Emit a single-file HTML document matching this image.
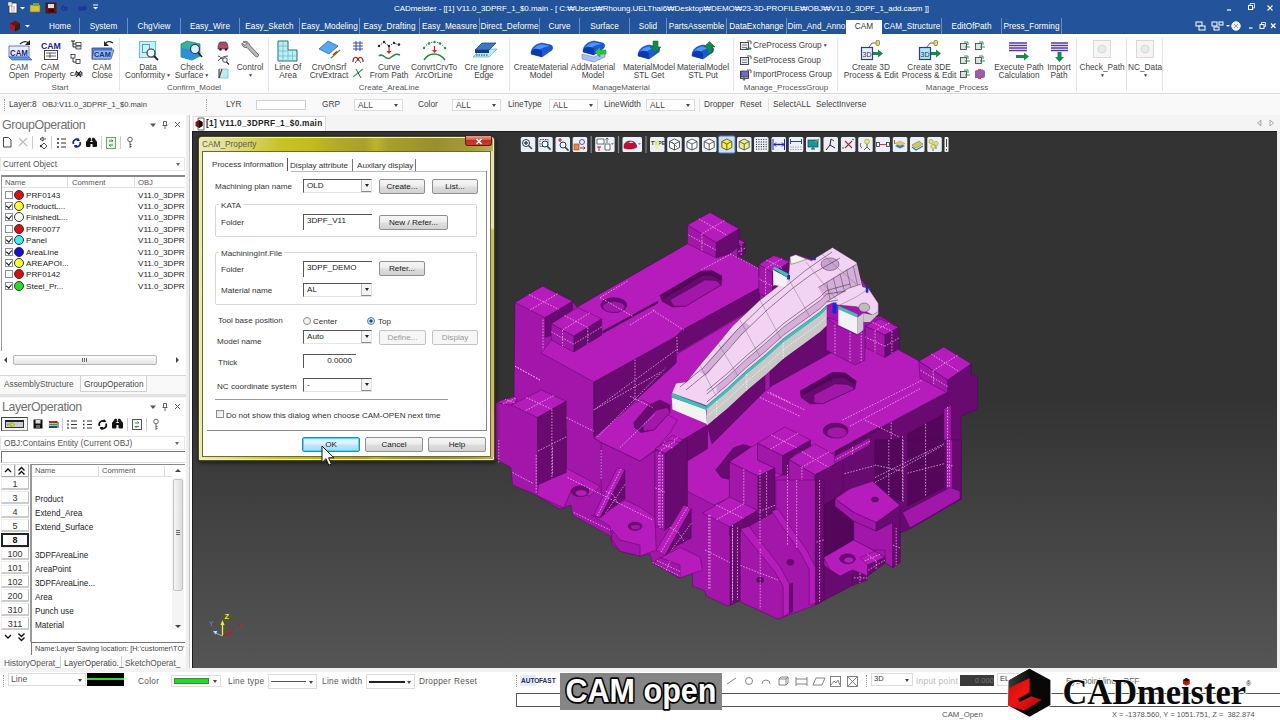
<!DOCTYPE html>
<html><head><meta charset="utf-8"><title>CADmeister</title>
<style>
*{box-sizing:border-box;margin:0;padding:0}
html,body{width:1280px;height:720px;overflow:hidden;background:#fff;font-family:"Liberation Sans","NanumGothic",sans-serif;font-size:9px;color:#333}
.a{position:absolute}
.t{position:absolute;white-space:nowrap;line-height:1}
#hdr{position:absolute;left:0;top:0;width:1280px;height:34px;background:#23539a}
#hdr .tab{position:absolute;top:19px;height:15px;color:#fff;font-size:8.2px;line-height:16.5px;text-align:center;white-space:nowrap;overflow:hidden;letter-spacing:.05px}
#hdr .sep{position:absolute;top:18px;width:1px;height:16px;background:#6f8fc4}
#rib{position:absolute;left:0;top:34px;width:1280px;height:60px;background:#fff;border-bottom:1px solid #d6dbe3}
#rib .gs{position:absolute;top:4px;width:1px;height:53px;background:#e1e4ea}
#rib .gl{position:absolute;top:49px;font-size:8px;color:#555;white-space:nowrap;transform:translateX(-50%);line-height:9px;letter-spacing:0}
#rib .lb{position:absolute;font-size:8.3px;color:#444;white-space:nowrap;transform:translateX(-50%);line-height:8px;text-align:center;letter-spacing:0}
#rib .ar{font-size:5px;vertical-align:1px;margin-left:1px}
</style></head><body>
<div id="hdr">
<svg class="a" style="left:0;top:0" width="120" height="18" viewBox="0 0 120 18">
<rect x="9" y="3" width="8" height="10" fill="#fff" stroke="#333" stroke-width=".8"/><rect x="8" y="2" width="4" height="4" fill="#e8e8d0" stroke="#555" stroke-width=".5"/><path d="M11 7h4M11 9h4M11 11h4" stroke="#777" stroke-width=".6"/>
<path d="M20 7l2.5 2.5 2.5-2.5z" fill="#fff"/>
<rect x="30" y="5" width="10" height="7" fill="#d8c040" stroke="#665" stroke-width=".6"/><rect x="33" y="3" width="6" height="3" fill="#70a040"/>
<rect x="46" y="3" width="10" height="10" fill="#7a1010" stroke="#222" stroke-width=".8"/><rect x="48" y="4" width="6" height="4" fill="#ddd"/><rect x="48" y="9" width="6" height="3" fill="#400"/>
<path d="M62 7h5v3h-5z M64 5l-3 3 3 3" fill="#1c3c9c" stroke="#1a34a0" stroke-width=".8"/>
<path d="M79 7h5v3h-5z M84 5l3 3-3 3" fill="#1c3c9c" stroke="#1a34a0" stroke-width=".8"/>
<path d="M93 5h5" stroke="#fff" stroke-width="1"/><path d="M93 7l2.5 2.5 2.5-2.5z" fill="#fff"/>
</svg>
<div class="t" style="left:394px;top:5px;color:#fff;font-size:8px;letter-spacing:-.06px">CADmeister - [[1] V11.0_3DPRF_1_$0.main - [ C:₩Users₩Rhoung.UELThai6₩Desktop₩DEMO₩23-3D-PROFILE₩OBJ₩V11.0_3DPF_1_add.casm ]]</div>
<svg class="a" style="left:1220px;top:0" width="60" height="18" viewBox="0 0 60 18"><path d="M7 10h4" stroke="#fff" stroke-width="1.2"/><rect x="28.500" y="5.500" width="4" height="4" fill="none" stroke="#fff"/><path d="M30 5v-1.500h4.500v4.500h-1.500" fill="none" stroke="#fff" stroke-width=".8"/><path d="M47.500 5.500l5 5M52.500 5.500l-5 5" stroke="#fff" stroke-width="1.200"/></svg>
<svg class="a" style="left:8px;top:18px" width="32" height="16" viewBox="0 0 32 16"><path d="M7 3l5 2.500v5.500l-5 2.500l-5-2.500v-5.500z" fill="#b01818"/><path d="M7 3l5 2.500v5.500l-5 2.500z" fill="#222"/><path d="M7 3l5 2.500l-5 2.500l-5-2.500z" fill="#701010"/><path d="M17 7l2.500 2.500 2.500-2.500z" fill="#fff"/></svg>
<div class="tab" style="left:41px;width:38px">Home</div>
<div class="tab" style="left:80px;width:47px">System</div>
<div class="tab" style="left:128px;width:52px">ChgView</div>
<div class="tab" style="left:181px;width:58px">Easy_Wire</div>
<div class="tab" style="left:240px;width:59px">Easy_Sketch</div>
<div class="tab" style="left:300px;width:59px">Easy_Modeling</div>
<div class="tab" style="left:360px;width:59px">Easy_Drafting</div>
<div class="tab" style="left:420px;width:59px">Easy_Measure</div>
<div class="tab" style="left:480px;width:59px">Direct_Deforme</div>
<div class="tab" style="left:540px;width:39px">Curve</div>
<div class="tab" style="left:580px;width:49px">Surface</div>
<div class="tab" style="left:630px;width:36px">Solid</div>
<div class="tab" style="left:667px;width:59px">PartsAssemble</div>
<div class="tab" style="left:727px;width:59px">DataExchange</div>
<div class="tab" style="left:787px;width:59px">Dim_And_Anno</div>
<div class="tab" style="left:846px;width:36px;background:#fff;color:#333;top:20px;height:14px;line-height:13px">CAM</div>
<div class="tab" style="left:883px;width:58px">CAM_Structure</div>
<div class="tab" style="left:942px;width:59px">EditOfPath</div>
<div class="tab" style="left:1002px;width:59px">Press_Forming</div>
<div class="sep" style="left:79px"></div>
<div class="sep" style="left:127px"></div>
<div class="sep" style="left:180px"></div>
<div class="sep" style="left:239px"></div>
<div class="sep" style="left:299px"></div>
<div class="sep" style="left:359px"></div>
<div class="sep" style="left:419px"></div>
<div class="sep" style="left:479px"></div>
<div class="sep" style="left:539px"></div>
<div class="sep" style="left:579px"></div>
<div class="sep" style="left:629px"></div>
<div class="sep" style="left:666px"></div>
<div class="sep" style="left:726px"></div>
<div class="sep" style="left:786px"></div>
<div class="sep" style="left:941px"></div>
<div class="sep" style="left:1001px"></div>
<div class="sep" style="left:1061px"></div>
<svg class="a" style="left:1190px;top:18px" width="90" height="16" viewBox="0 0 90 16">
<rect x="6" y="4" width="6" height="4" fill="none" stroke="#fff"/><rect x="9" y="8" width="6" height="4" fill="#23539a" stroke="#fff"/>
<rect x="22" y="4" width="5" height="4" fill="none" stroke="#fff"/><rect x="29" y="4" width="4" height="3" fill="none" stroke="#fff"/><rect x="24" y="9" width="5" height="3" fill="none" stroke="#fff"/>
<path d="M36 7l2 2 2-2z" fill="#fff"/>
<circle cx="46" cy="8" r="4.200" fill="#eee" stroke="#fff"/><path d="M44 6l4 4M48 6l-4 4" stroke="#889" stroke-width=".8"/>
<path d="M59 10h3.500" stroke="#fff" stroke-width="1.200"/>
<rect x="70" y="6.500" width="4" height="4" fill="none" stroke="#fff"/><path d="M71.500 6v-1.500h4v4h-1.500" fill="none" stroke="#fff" stroke-width=".8"/>
<path d="M81 5.500l4.500 4.500M85.500 5.500l-4.500 4.500" stroke="#fff" stroke-width="1.200"/></svg>
</div>
<div id="rib">
<div class="lb" style="left:19px;top:29px">CAM</div>
<div class="lb" style="left:19px;top:37px">Open</div>
<div class="lb" style="left:50px;top:29px">CAM</div>
<div class="lb" style="left:50px;top:37px">Property</div>
<div class="lb" style="left:102px;top:29px">CAM</div>
<div class="lb" style="left:102px;top:37px">Close</div>
<div class="lb" style="left:148px;top:29px">Data</div>
<div class="lb" style="left:148px;top:37px">Conformity<span class="ar">▼</span></div>
<div class="lb" style="left:192px;top:29px">Check</div>
<div class="lb" style="left:192px;top:37px">Surface<span class="ar">▼</span></div>
<div class="lb" style="left:250px;top:29px">Control</div>
<div class="lb" style="left:250px;top:37px"><span class="ar">▼</span></div>
<div class="lb" style="left:288px;top:29px">Line Of</div>
<div class="lb" style="left:288px;top:37px">Area</div>
<div class="lb" style="left:329px;top:29px">CrvOnSrf</div>
<div class="lb" style="left:329px;top:37px">CrvExtract</div>
<div class="lb" style="left:389px;top:29px">Curve</div>
<div class="lb" style="left:389px;top:37px">From Path</div>
<div class="lb" style="left:434px;top:29px">ConvrtCrvTo</div>
<div class="lb" style="left:434px;top:37px">ArcOrLine</div>
<div class="lb" style="left:484px;top:29px">Cre Ignore</div>
<div class="lb" style="left:484px;top:37px">Edge</div>
<div class="lb" style="left:541px;top:29px">CreateMaterial</div>
<div class="lb" style="left:541px;top:37px">Model</div>
<div class="lb" style="left:593px;top:29px">AddMaterial</div>
<div class="lb" style="left:593px;top:37px">Model</div>
<div class="lb" style="left:649px;top:29px">MaterialModel</div>
<div class="lb" style="left:649px;top:37px">STL Get</div>
<div class="lb" style="left:703px;top:29px">MaterialModel</div>
<div class="lb" style="left:703px;top:37px">STL Put</div>
<div class="lb" style="left:871px;top:29px">Create 3D</div>
<div class="lb" style="left:871px;top:37px">Process &amp; Edit</div>
<div class="lb" style="left:929px;top:29px">Create 3DE</div>
<div class="lb" style="left:929px;top:37px">Process &amp; Edit</div>
<div class="lb" style="left:1019px;top:29px">Execute Path</div>
<div class="lb" style="left:1019px;top:37px">Calculation</div>
<div class="lb" style="left:1059px;top:29px">Import</div>
<div class="lb" style="left:1059px;top:37px">Path</div>
<div class="lb" style="left:1102px;top:29px">Check_Path</div>
<div class="lb" style="left:1102px;top:37px"><span class="ar">▼</span></div>
<div class="lb" style="left:1145px;top:29px">NC_Data</div>
<div class="lb" style="left:1145px;top:37px"><span class="ar">▼</span></div>
<div class="gl" style="left:60px">Start</div>
<div class="gl" style="left:194px">Confirm_Model</div>
<div class="gl" style="left:389px">Create_AreaLine</div>
<div class="gl" style="left:621px">ManageMaterial</div>
<div class="gl" style="left:786px">Manage_ProcessGroup</div>
<div class="gl" style="left:957px">Manage_Process</div>
<div class="gs" style="left:119px"></div>
<div class="gs" style="left:268px"></div>
<div class="gs" style="left:509px"></div>
<div class="gs" style="left:733px"></div>
<div class="gs" style="left:837px"></div>
<div class="gs" style="left:1076px"></div>
<div class="gs" style="left:1126px"></div>
<div class="gs" style="left:1162px"></div>
<div class="t" style="left:753px;top:7px;font-size:8.3px;color:#444;letter-spacing:0">CreProcess Group<span class="ar">▼</span></div>
<div class="t" style="left:753px;top:22px;font-size:8.3px;color:#444;letter-spacing:0">SetProcess Group</div>
<div class="t" style="left:753px;top:36px;font-size:8.3px;color:#444;letter-spacing:0">ImportProcess Group</div>
<!--IC0--><svg class="a" style="left:0;top:0" width="1280" height="60" viewBox="0 34 1280 60">
<path d="M9 46h20v11h-20z" fill="#e8f0ff" stroke="#3a5aa8" stroke-width=".8"/><path d="M9 57l3 3h20l-3-3z" fill="#5a9ae0" stroke="#2a4a98" stroke-width=".6"/><text x="10" y="56" font-family="Liberation Sans,sans-serif" font-weight="bold" font-size="8.5" fill="#1a1a8a" textLength="17.9" lengthAdjust="spacingAndGlyphs">CAM</text><path d="M20 44c3-3 6-3 9-1" fill="none" stroke="#223" stroke-width="1.200"/><path d="M30 40v5h-5z" fill="#223"/>
<text x="41" y="49" font-family="Liberation Sans,sans-serif" font-weight="bold" font-size="9.5" fill="#1a1a8a" textLength="19.9" lengthAdjust="spacingAndGlyphs">CAM</text><rect x="44.500" y="50.500" width="13" height="9" fill="#fff" stroke="#333" stroke-width=".9"/><path d="M46 53h10M46 56h10M50 53v5" stroke="#333" stroke-width=".8"/>
<path d="M71 41h4M73 41v6h3M73 44h3" stroke="#223" stroke-width="1" fill="none"/><rect x="76" y="42.500" width="5" height="3" fill="#fff" stroke="#223" stroke-width=".7"/><rect x="76" y="46" width="5" height="3" fill="#ddd" stroke="#223" stroke-width=".7"/>
<rect x="71" y="54.500" width="4" height="3.500" fill="#fff" stroke="#223" stroke-width=".8"/><path d="M73 58v4h3" stroke="#223" stroke-width=".9" fill="none"/><rect x="76" y="59.500" width="4" height="4" fill="#fff" stroke="#223" stroke-width=".8"/>
<text x="70" y="76" font-family="Liberation Sans,sans-serif" font-weight="bold" font-size="5.500" fill="#223">CAM</text><path d="M76 71l5 6M81 71l-5 6" stroke="#111" stroke-width="1.100"/>
<path d="M92 48h20l-2 11h-18z" fill="#5a8ad8" stroke="#2a3a78" stroke-width=".8"/><path d="M94 50h20l-3 9h-19z" fill="#8ab8f0" stroke="#2a3a78" stroke-width=".6"/><text x="94" y="57" font-family="Liberation Sans,sans-serif" font-weight="bold" font-size="8" fill="#2a2a7a" textLength="16.8" lengthAdjust="spacingAndGlyphs">CAM</text><path d="M105 44c2-3 5-3 8-1" fill="none" stroke="#223" stroke-width="1.100"/><path d="M104 41v5h5z" fill="#223"/>
<rect x="139.500" y="41.500" width="16" height="16" fill="#c8f4f8" stroke="#58c8d8" stroke-width="1"/><rect x="142.500" y="44.500" width="7" height="8" fill="none" stroke="#3a8aa0" stroke-width=".8"/><circle cx="151" cy="53" r="4" fill="#e8fbff" stroke="#334" stroke-width="1.200"/><path d="M154 56l4 4" stroke="#223" stroke-width="1.800"/>
<path d="M181 44l6-3 13 3v12l-8 4-11-3z" fill="#38b0a0" stroke="#187868" stroke-width=".7"/><path d="M181 48l11 2 8-3v9l-8 4-11-3z" fill="#2a90d8"/><circle cx="195" cy="49" r="4.500" fill="#d8f4ff" stroke="#334" stroke-width="1.200"/><path d="M198 52.500l4 4.500" stroke="#223" stroke-width="1.800"/>
<path d="M218 46l2-4h6l2 4v3h-10z" fill="#c84848" stroke="#5a2a6a" stroke-width=".7"/><circle cx="220.500" cy="49.500" r="1.300" fill="#223"/><circle cx="226" cy="49.500" r="1.300" fill="#223"/><path d="M218 44h10" stroke="#4a5ab8" stroke-width="1"/>
<path d="M218 56c3 0 3 4 6 3M218 61c2-3 6-5 10-5" fill="none" stroke="#334" stroke-width=".9"/><circle cx="225" cy="60" r="2.300" fill="#fff" stroke="#334" stroke-width=".9"/><path d="M226.500 62l2.500 2.500" stroke="#223" stroke-width="1.200"/>
<path d="M219 69h9v9h-9z" fill="#b8f0f0" stroke="#68c0c8" stroke-width=".7"/><path d="M219 78l3-9" stroke="#a02020" stroke-width="1.100"/><path d="M219 69v9" stroke="#334" stroke-width=".9"/>
<path d="M243 42c3-1.500 6 0 6.500 3l8.500 9c1.500 1.500-.5 4-2.500 2.500l-8.500-9c-3 .5-5.500-1.500-5-4.500l3 2.500 2-2z" fill="#b8b8b8" stroke="#555" stroke-width=".8"/>
<path d="M278 41h10v9h9v11h-19z" fill="#b8f0f4" stroke="#2a6a7a" stroke-width="1"/><path d="M283 41v20M288 50v11M278 46h10M278 51h10M278 56h19M292.500 50v11" stroke="#58b0c0" stroke-width=".6"/>
<path d="M319 49l9-8 10 5-9 8z" fill="#58a8f0" stroke="#2a5a98" stroke-width=".7"/><path d="M331 58l9-8" stroke="#38a038" stroke-width="1.300"/><path d="M333 55l4-3.500" stroke="#d82020" stroke-width="1.600"/>
<path d="M353 43h10M353 46h10M353 49h10M356 41v10M360 41v10" stroke="#2a3a98" stroke-width=".9"/>
<path d="M353 62c0-6 5-6 5-1M363 62c0-6-5-6-5-1" fill="none" stroke="#983020" stroke-width="1.300"/><path d="M355 63l3-4 3 4" fill="none" stroke="#334" stroke-width=".8"/>
<path d="M353 77l10-8" stroke="#38a038" stroke-width="1.100"/><path d="M356 69l5 9" stroke="#334" stroke-width=".9"/>
<path d="M379 46l5-4 5 4 5-3 5 2" fill="none" stroke="#2a3a88" stroke-width=".9" stroke-dasharray="1.500 1"/><circle cx="379" cy="46" r="1.200" fill="#223"/><circle cx="384" cy="42" r="1.200" fill="#223"/><circle cx="389" cy="46" r="1.200" fill="#223"/><circle cx="394" cy="43" r="1.200" fill="#223"/><circle cx="399" cy="44.500" r="1.200" fill="#223"/><path d="M389 47v5" stroke="#d82020" stroke-width="1.200"/><path d="M386.500 51h5l-2.500 3z" fill="#d82020"/><path d="M379 56c4-4 7 5 11 2s6-5 10-3" fill="none" stroke="#2a8a3a" stroke-width="1.500"/>
<path d="M424 48c5-8 15-8 21 0" fill="none" stroke="#2a8a3a" stroke-width="1" stroke-dasharray="1.500 1.500"/><circle cx="424" cy="48" r="1.200" fill="#2a8a3a"/><circle cx="429" cy="43.500" r="1.200" fill="#2a8a3a"/><circle cx="434.500" cy="42" r="1.200" fill="#2a8a3a"/><circle cx="440" cy="43.500" r="1.200" fill="#2a8a3a"/><circle cx="445" cy="48" r="1.200" fill="#2a8a3a"/><path d="M434.500 46v5" stroke="#d82020" stroke-width="1.200"/><path d="M432 50h5l-2.500 3z" fill="#d82020"/><path d="M424 60c5-8 15-8 21 0" fill="none" stroke="#2a8a3a" stroke-width="1.500"/>
<path d="M473 57l8-8h16l-8 8z" fill="#b8eef4" stroke="#58a8c0" stroke-width=".7"/><path d="M475 50l7-7h14l-7 7z" fill="#3a78c8" stroke="#1a3a78" stroke-width=".7"/><path d="M475 50h14v3h-14z" fill="#1a3a78"/><path d="M476 55h12" stroke="#223" stroke-width=".9" stroke-dasharray="1.500 1"/>
<path d="M531 54C531 47,536 44,542 43L551 45C553 46,553 48,552 50L542 57Z" fill="#1a58d8" stroke="#0a2a88" stroke-width=".5"/><path d="M533 50C535 46,539 44.5,543 44.5L550 46C545 46.5,539 49,537 52Z" fill="#4a98ff"/><path d="M531 54C531 49,537 47,542 51L542 57Z" fill="#0a3ab0"/>
<path d="M582 54l12 3 11-5v5l-11 5-12-3z" fill="#a8c0f0" stroke="#6a88c8" stroke-width=".6"/><path d="M583 52C583 45,588 42,594 41L603 43C605 44,605 46,604 48L594 55Z" fill="#1a58d8" stroke="#0a2a88" stroke-width=".5"/><path d="M585 48C587 44,591 42.5,595 42.5L602 44C597 44.5,591 47,589 50Z" fill="#4a98ff"/><path d="M583 52C583 47,589 45,594 49L594 55Z" fill="#0a3ab0"/><path d="M606 50h-6v-3l-5 5 5 5v-3h6z" fill="#28c838" stroke="#188828" stroke-width=".5"/>
<path d="M638 56C638 49,643 46,649 45L658 47C660 48,660 50,659 52L649 59Z" fill="#1a58d8" stroke="#0a2a88" stroke-width=".5"/><path d="M640 52C642 48,646 46.5,650 46.5L657 48C652 48.5,646 51,644 54Z" fill="#4a98ff"/><path d="M638 56C638 51,644 49,649 53L649 59Z" fill="#0a3ab0"/><path d="M653 41h5v6h3l-5.500 5.500-5.500-5.500h3z" fill="#188848" stroke="#0a5828" stroke-width=".5"/>
<path d="M692 56C692 49,697 46,703 45L712 47C714 48,714 50,713 52L703 59Z" fill="#1a58d8" stroke="#0a2a88" stroke-width=".5"/><path d="M694 52C696 48,700 46.5,704 46.5L711 48C706 48.5,700 51,698 54Z" fill="#4a98ff"/><path d="M692 56C692 51,698 49,703 53L703 59Z" fill="#0a3ab0"/><path d="M707 53h5v-6h3l-5.500-5.500-5.500 5.500h3z" fill="#188848" stroke="#0a5828" stroke-width=".5"/>
<rect x="740.500" y="42.5" width="8" height="7" fill="#e8e8f0" stroke="#334" stroke-width=".9"/><path d="M742 45h5M742 47.5h5" stroke="#556" stroke-width=".7"/><path d="M747 41h4v3" fill="none" stroke="#334" stroke-width=".8"/><rect x="740.500" y="57.5" width="8" height="7" fill="#e8e8f0" stroke="#334" stroke-width=".9"/><path d="M742 60h5M742 62.5h5" stroke="#556" stroke-width=".7"/><path d="M747 56h4v3" fill="none" stroke="#334" stroke-width=".8"/><rect x="740.500" y="71.5" width="8" height="7" fill="#e8e8f0" stroke="#334" stroke-width=".9"/><path d="M742 74h5M742 76.5h5" stroke="#556" stroke-width=".7"/><path d="M747 70h4v3" fill="none" stroke="#334" stroke-width=".8"/><path d="M746 48.500h5l-1.500-1.500M751 48.500l-1.500 1.500" stroke="#188848" stroke-width=".9" fill="none"/><path d="M744 77v3M742.500 78.500l1.500 2 1.500-2" stroke="#188848" stroke-width="1" fill="none"/><rect x="741" y="71" width="7.500" height="6" fill="#7a6ab8" stroke="#334" stroke-width=".7"/>
<rect x="861.500" y="47.500" width="11" height="12" fill="#e8eef8" stroke="#2a3a98" stroke-width="1.200"/><text x="862.5" y="57" font-family="Liberation Sans,sans-serif" font-size="7" fill="#334" textLength="9" lengthAdjust="spacingAndGlyphs">3D</text><path d="M873 52h5v-2.500l5 4-5 4v-2.500h-5z" fill="#188848"/><path d="M869 47l3-4h5" fill="none" stroke="#666" stroke-width="1"/><rect x="876" y="40.500" width="3.500" height="5" rx="1" fill="#e8e040" stroke="#555" stroke-width=".6"/><rect x="919.500" y="47.500" width="11" height="12" fill="#a8e8f8" stroke="#2a3a98" stroke-width="1.200"/><text x="920.5" y="57" font-family="Liberation Sans,sans-serif" font-size="7" fill="#334" textLength="9" lengthAdjust="spacingAndGlyphs">3D</text><path d="M931 52h5v-2.500l5 4-5 4v-2.500h-5z" fill="#188848"/><path d="M927 47l3-4h5" fill="none" stroke="#666" stroke-width="1"/><rect x="934" y="40.500" width="3.500" height="5" rx="1" fill="#e8e040" stroke="#555" stroke-width=".6"/>
<rect x="960.500" y="43.5" width="6" height="6" fill="#d8e8d8" stroke="#334" stroke-width=".8"/><path d="M964 42h4v3M965 47h5" fill="none" stroke="#188848" stroke-width=".9"/><rect x="960.500" y="57.5" width="6" height="6" fill="#d8e8d8" stroke="#334" stroke-width=".8"/><path d="M964 56h4v3M965 61h5" fill="none" stroke="#188848" stroke-width=".9"/><rect x="960.500" y="71.5" width="6" height="6" fill="#d8e8d8" stroke="#334" stroke-width=".8"/><path d="M964 70h4v3M965 75h5" fill="none" stroke="#188848" stroke-width=".9"/><rect x="975.500" y="43.5" width="6" height="6" fill="#d8e8d8" stroke="#334" stroke-width=".8"/><path d="M979 42h4v3M980 47h5" fill="none" stroke="#188848" stroke-width=".9"/><rect x="975.500" y="57.5" width="6" height="6" fill="#d8e8d8" stroke="#334" stroke-width=".8"/><path d="M979 56h4v3M980 61h5" fill="none" stroke="#188848" stroke-width=".9"/><rect x="975.500" y="71.5" width="6" height="6" fill="#d8e8d8" stroke="#334" stroke-width=".8"/><path d="M979 70h4v3M980 75h5" fill="none" stroke="#188848" stroke-width=".9"/><rect x="975" y="70" width="10" height="8" rx="2" fill="#7a6ac8"/><rect x="978" y="69" width="3" height="10" fill="#d84878"/>
<path d="M1009 43h18M1009 45.500h18M1009 48h18M1009 50.500h18" stroke="#5a3a98" stroke-width="1.300"/><path d="M1016 55h8v-2.500l5 4-5 4v-2.500h-8z" fill="#188848"/>
<path d="M1051 43h17M1051 45.500h17M1051 48h17M1051 50.500h17" stroke="#5a3a98" stroke-width="1.300"/><path d="M1057.500 52h4v5h2.500l-4.500 5-4.500-5h2.500z" fill="#188848"/>
<rect x="1093.500" y="40.500" width="17" height="17" fill="#f4f6f6" stroke="#e0c8d0" stroke-width=".8"/><circle cx="1102" cy="49" r="4" fill="#e4ecec" stroke="#c8d0d0" stroke-width=".7"/><rect x="1136.500" y="40.500" width="17" height="17" fill="#f4f6f6" stroke="#e0c8d0" stroke-width=".8"/><circle cx="1145" cy="49" r="4" fill="#e4ecec" stroke="#c8d0d0" stroke-width=".7"/>
</svg>
<!--IC1-->
</div>
<style>
#tb{position:absolute;left:0;top:95px;width:1280px;height:20px;background:#f9f9f9}
#tb .t{top:5px;font-size:8.3px;color:#444}
#tb .cb{position:absolute;top:4px;height:12px;width:49px;background:#fff;border:1px solid #dcdcdc;font-size:8.3px;line-height:10px;padding-left:3px;color:#444}
#tb .cb:after{content:"";position:absolute;right:4px;top:4px;border:2px solid transparent;border-top:3px solid #444}
#tb .gr{position:absolute;top:4px;width:1px;height:12px;border-left:1px dotted #999}
#tb .sp{position:absolute;top:3px;width:1px;height:14px;background:#e4e4e4}
</style>
<div id="tb">
<div class="gr" style="left:4px"></div>
<div class="t" style="left:9px">Layer:8</div><div class="t" style="left:42px;font-size:7.600px;top:5.500px">OBJ:V11.0_3DPRF_1_$0.main</div>
<div class="gr" style="left:206px"></div>
<div class="t" style="left:226px">LYR</div><div class="a" style="left:256px;top:5px;width:50px;height:10px;background:#fff;border:1px solid #d0d0d0"></div>
<div class="t" style="left:322px">GRP</div><div class="cb" style="left:354px">ALL</div>
<div class="t" style="left:418px">Color</div><div class="cb" style="left:452px">ALL</div>
<div class="t" style="left:508px">LineType</div><div class="cb" style="left:549px">ALL</div>
<div class="t" style="left:604px">LineWidth</div><div class="cb" style="left:646px">ALL</div>
<div class="sp" style="left:699px"></div>
<div class="t" style="left:704px">Dropper</div><div class="t" style="left:740px">Reset</div>
<div class="sp" style="left:768px"></div>
<div class="t" style="left:773px">SelectALL</div><div class="t" style="left:816px">SelectInverse</div>
</div>
<style>
#lp{position:absolute;left:0;top:115px;width:192px;height:557px;background:#f4f4f4}
#lp .ttl{position:absolute;left:2px;font-size:12.4px;color:#707070;letter-spacing:-.4px;white-space:nowrap;line-height:14px;font-weight:400}
#lp .row{position:absolute;left:0;height:11px;font-size:8.1px;line-height:11px;color:#222;white-space:nowrap}
#lp .ck{position:absolute;left:5px;top:1px;width:8px;height:8px;border:1px solid #8a8f98;background:#fff}
#lp .ck.on:after{content:"";position:absolute;left:1px;top:0px;width:3px;height:4px;border:solid #111;border-width:0 1.500px 1.500px 0;transform:rotate(40deg)}
#lp .dot{position:absolute;left:14px;top:0px;width:10px;height:10px;border-radius:50%;border:1px solid #333}
#lp .hd{position:absolute;font-size:7.7px;color:#555;line-height:10px;white-space:nowrap}
</style>
<div id="lp">
<div class="a" style="left:0;top:0;width:188px;height:279px;background:#fff"></div>
<div class="ttl" style="top:3px">GroupOperation</div>
<svg class="a" style="left:146px;top:4px" width="40" height="12" viewBox="0 0 40 12"><path d="M4 4.500h6l-3 3.500z" fill="#555"/><path d="M17.500 2.500v4M20.500 2.500v4M16.500 6.500h5M19 6.500v3.500M17.500 2.500h3" stroke="#555" stroke-width=".9" fill="none"/><path d="M29 3l5 5M34 3l-5 5" stroke="#555" stroke-width="1"/></svg>
<svg class="a" style="left:0;top:20px" width="140" height="16" viewBox="0 0 140 16">
<path d="M3.500 2.500h5l2.500 2.500v7h-7.500z" fill="#fff" stroke="#333" stroke-width=".9"/>
<path d="M19 3l8 8M27 3l-8 8" stroke="#bbb" stroke-width="1.200"/>
<path d="M32.500 1v13M51.500 1v13M101.500 1v13M120.500 1v13" stroke="#ccc" stroke-width="1"/>
<path d="M40 4l3-2v4zM43 4h3M44 8l3 3-3 3-3-3z" fill="none" stroke="#333" stroke-width=".9"/><circle cx="41" cy="11" r="1.200" fill="#333"/>
<path d="M57 4h2M57 8h2M57 12h2" stroke="#333" stroke-width="1.300"/><path d="M61 4h5M61 8h5M61 12h5" stroke="#333" stroke-width="1"/>
<path d="M73.500 9a3.500 3.500 0 0 1 5.500-4M80 7a3.500 3.500 0 0 1-5.500 4" fill="none" stroke="#1a2a8c" stroke-width="1.700"/><path d="M78 3l2 3h-3.500zM76 13l-2-3h3.500z" fill="#1a2a8c"/>
<path d="M87 6l2-3h1.500l.5 3M96 6l-2-3h-1.500l-.5 3" fill="#111" stroke="#111" stroke-width=".6"/><rect x="86" y="6" width="4.500" height="6" rx="1" fill="#111"/><rect x="92.500" y="6" width="4.500" height="6" rx="1" fill="#111"/><rect x="90" y="7" width="3" height="2" fill="#111"/>
<rect x="106.500" y="2.500" width="9" height="11" fill="#e8f4e8" stroke="#7a9a7a"/><path d="M109 6h4l-1.500-1.500M113 10h-4l1.500 1.500" stroke="#2a6a2a" stroke-width=".9" fill="none"/>
<circle cx="130" cy="4.500" r="2.300" fill="none" stroke="#555" stroke-width=".9"/><path d="M130 7v6M130 9.500h1.500M130 11.500h1.500" stroke="#555" stroke-width=".9"/>
</svg>
<div class="a" style="left:0;top:42px;width:185px;height:14px;background:#fff;border:1px solid #e6e6e6"></div>
<div class="t" style="left:3px;top:45px;font-size:8.300px;color:#555">Current Object</div>
<div class="a" style="left:176px;top:48px;border:2px solid transparent;border-top:3px solid #666"></div>
<div class="a" style="left:1px;top:60px;width:184px;height:176px;border-top:2px solid #888;border-left:1px solid #999;background:#fff"></div>
<div class="a" style="left:2px;top:62px;width:183px;height:11px;border-bottom:1px solid #e0e0e0"></div>
<div class="a" style="left:67px;top:62px;width:1px;height:11px;background:#ddd"></div><div class="a" style="left:134px;top:62px;width:1px;height:11px;background:#ddd"></div>
<div class="hd" style="left:5px;top:63px">Name</div><div class="hd" style="left:72px;top:63px">Comment</div><div class="hd" style="left:138px;top:63px">OBJ</div>
<div class="row" style="top:74.5px"><div class="ck"></div><div class="dot" style="background:#d81010"></div><span style="position:absolute;left:26px">PRF0143</span><span style="position:absolute;left:138px">V11.0_3DPR</span></div>
<div class="row" style="top:85.9px"><div class="ck on"></div><div class="dot" style="background:#ffff30"></div><span style="position:absolute;left:26px">ProductL...</span><span style="position:absolute;left:138px">V11.0_3DPR</span></div>
<div class="row" style="top:97.3px"><div class="ck on"></div><div class="dot" style="background:#fff"></div><span style="position:absolute;left:26px">FinishedL...</span><span style="position:absolute;left:138px">V11.0_3DPR</span></div>
<div class="row" style="top:108.7px"><div class="ck"></div><div class="dot" style="background:#d81010"></div><span style="position:absolute;left:26px">PRF0077</span><span style="position:absolute;left:138px">V11.0_3DPR</span></div>
<div class="row" style="top:120.1px"><div class="ck on"></div><div class="dot" style="background:#40f0f0"></div><span style="position:absolute;left:26px">Panel</span><span style="position:absolute;left:138px">V11.0_3DPR</span></div>
<div class="row" style="top:131.5px"><div class="ck on"></div><div class="dot" style="background:#1010d0"></div><span style="position:absolute;left:26px">AreaLine</span><span style="position:absolute;left:138px">V11.0_3DPR</span></div>
<div class="row" style="top:142.9px"><div class="ck on"></div><div class="dot" style="background:#ffff30"></div><span style="position:absolute;left:26px">AREAPOI...</span><span style="position:absolute;left:138px">V11.0_3DPR</span></div>
<div class="row" style="top:154.3px"><div class="ck"></div><div class="dot" style="background:#d81010"></div><span style="position:absolute;left:26px">PRF0142</span><span style="position:absolute;left:138px">V11.0_3DPR</span></div>
<div class="row" style="top:165.7px"><div class="ck on"></div><div class="dot" style="background:#20e020"></div><span style="position:absolute;left:26px">Steel_Pr...</span><span style="position:absolute;left:138px">V11.0_3DPR</span></div>
<div class="a" style="left:2px;top:238px;width:183px;height:14px;background:#fff"></div>
<div class="a" style="left:13px;top:240px;width:144px;height:10px;border:1px solid #b8b8b8;border-radius:2px;background:linear-gradient(#fdfdfd,#e4e4e4)"></div>
<div class="a" style="left:82px;top:243px;width:5px;height:4px;border-left:1px solid #666;border-right:1px solid #666"></div><div class="a" style="left:84px;top:243px;width:1px;height:4px;background:#666"></div>
<div class="a" style="left:4px;top:242px;border:3px solid transparent;border-right:3px solid #444;border-left:0"></div>
<div class="a" style="left:176px;top:242px;border:3px solid transparent;border-left:3px solid #444;border-right:0"></div>
<div class="a" style="left:0;top:260px;width:188px;height:1px;background:#d8d8d8"></div>
<div class="a" style="left:0;top:261px;width:188px;height:18px;background:#f9f9f9"></div>
<div class="a" style="left:80px;top:261px;width:67px;height:16px;background:#fff;border:1px solid #d0d0d0;border-top:0"></div>
<div class="t" style="left:4px;top:265px;font-size:8.300px;color:#555">AssemblyStructure</div>
<div class="t" style="left:84px;top:265px;font-size:8.300px;color:#444">GroupOperation</div>
<div class="a" style="left:0;top:279px;width:186px;height:3px;background:#e2e2e2"></div>
<div class="a" style="left:0;top:283px;width:188px;height:274px;background:#fff"></div>
<div class="ttl" style="top:285px">LayerOperation</div>
<svg class="a" style="left:146px;top:286px" width="40" height="12" viewBox="0 0 40 12"><path d="M4 4.500h6l-3 3.500z" fill="#555"/><path d="M17.500 2.500v4M20.500 2.500v4M16.500 6.500h5M19 6.500v3.500M17.500 2.500h3" stroke="#555" stroke-width=".9" fill="none"/><path d="M29 3l5 5M34 3l-5 5" stroke="#555" stroke-width="1"/></svg>
<svg class="a" style="left:0;top:301px" width="170" height="17" viewBox="0 0 170 17">
<rect x="1.500" y="1.500" width="26" height="13" fill="#f4f4f4" stroke="#888"/><path d="M1.500 14.500v-13h26" stroke="#444" fill="none"/>
<rect x="5.500" y="4.500" width="18" height="7" fill="#ccc" stroke="#333"/><rect x="5.500" y="4" width="18" height="2" fill="#123"/><path d="M7 8h4v-2l4 2.500-4 2.500v-2h-4z" fill="#e8e020" stroke="#6a8a20" stroke-width=".5"/>
<rect x="33.500" y="3.500" width="9" height="9" fill="#111"/><rect x="35.500" y="4" width="5" height="3.500" fill="#ddd"/><rect x="36" y="9" width="4" height="3.500" fill="#666"/>
<path d="M49 5h8v2h-8z" fill="#c82020"/><path d="M49 7.500h8v2h-8z" fill="#30a030"/><path d="M49 10h8v2h-8z" fill="#2040c0"/><path d="M55 6h3v6" stroke="#333" fill="none"/>
<path d="M62.500 2v13M127.500 2v13M146.500 2v13" stroke="#ccc"/>
<path d="M68 4v9" stroke="#333" stroke-width="1.200" stroke-dasharray="2 1.500"/><path d="M71 5h6M71 8.500h6M71 12h6" stroke="#333" stroke-width="1.100"/>
<path d="M83 5h2.500M83 8.500h2.500M83 12h2.500" stroke="#333" stroke-width="1.300" stroke-dasharray="1.500 1"/><path d="M87 5h5M87 8.500h5M87 12h5" stroke="#333" stroke-width="1"/>
<path d="M99.500 10a3.700 3.700 0 0 1 5.500-4.500M106 7.500a3.700 3.700 0 0 1-5.500 4.500" fill="none" stroke="#111" stroke-width="1.700"/><path d="M104 3l2.500 3h-4zM102 14l-2.500-3h4z" fill="#111"/>
<path d="M113 6l2-3h1.500l.5 3M122 6l-2-3h-1.500l-.5 3" fill="#111" stroke="#111" stroke-width=".6"/><rect x="112" y="6" width="4.500" height="6.500" rx="1" fill="#111"/><rect x="118.500" y="6" width="4.500" height="6.500" rx="1" fill="#111"/><rect x="116" y="7" width="3" height="2" fill="#111"/>
<rect x="132.500" y="3.500" width="9" height="10" fill="#f4faf4" stroke="#555"/><path d="M135 7h4l-1.500-1.500M139 10.500h-4l1.500 1.500" stroke="#2a7a2a" stroke-width=".9" fill="none"/>
<circle cx="156" cy="5.500" r="2.300" fill="none" stroke="#555" stroke-width=".9"/><path d="M156 8v6M156 10.500h1.500M156 12.500h1.500" stroke="#555" stroke-width=".9"/>
</svg>
<div class="a" style="left:0;top:321px;width:185px;height:14px;background:#fff;border:1px solid #e6e6e6"></div>
<div class="t" style="left:4px;top:324px;font-size:8.300px;color:#555">OBJ:Contains Entity (Current OBJ)</div>
<div class="a" style="left:175px;top:327px;border:2px solid transparent;border-top:3px solid #666"></div>
<div class="a" style="left:1px;top:336px;width:184px;height:12px;background:#fff;border-top:1px solid #777;border-left:1px solid #777;border-bottom:1px solid #ddd"></div>
<div class="a" style="left:30px;top:349px;width:155px;height:178px;background:#fff;border-top:1px solid #888;border-left:2px solid #999"></div>
<div class="a" style="left:32px;top:350px;width:140px;height:12px;border-bottom:1px solid #e0e0e0"></div>
<div class="a" style="left:98px;top:351px;width:1px;height:10px;background:#ddd"></div><div class="a" style="left:164px;top:351px;width:1px;height:10px;background:#ddd"></div>
<div class="hd" style="left:35px;top:351px">Name</div><div class="hd" style="left:102px;top:351px">Comment</div>
<div class="a" style="left:1px;top:349px;width:14px;height:13px;background:#fff;border:1px solid #ddd;border-right-color:#aaa;border-bottom-color:#aaa"></div>
<div class="a" style="left:15px;top:349px;width:14px;height:13px;background:#fff;border:1px solid #ddd;border-right-color:#aaa;border-bottom-color:#aaa"></div>
<svg class="a" style="left:1px;top:349px" width="28" height="13" viewBox="0 0 28 13"><path d="M4 8l3-3 3 3" fill="none" stroke="#111" stroke-width="1.400"/><path d="M17.500 6.500l3-3 3 3M17.500 10.500l3-3 3 3" fill="none" stroke="#111" stroke-width="1.400"/></svg>
<svg class="a" style="left:1px;top:516px" width="28" height="13" viewBox="0 0 28 13"><path d="M4 4l3 3 3-3" fill="none" stroke="#111" stroke-width="1.400"/><path d="M17.500 2.500l3 3 3-3M17.500 6.500l3 3 3-3" fill="none" stroke="#111" stroke-width="1.400"/></svg>
<div class="a" style="left:1px;top:362px;width:28px;height:13px;border:1px solid #eee;border-right-color:#bbb;border-bottom:2px solid #ccc;background:#fff;text-align:center;font-size:9px;line-height:12.500px;color:#333">1</div>
<div class="a" style="left:1px;top:376px;width:28px;height:13px;border:1px solid #eee;border-right-color:#bbb;border-bottom:2px solid #ccc;background:#fff;text-align:center;font-size:9px;line-height:12.500px;color:#333">3</div>
<div class="t" style="left:35px;top:381px;font-size:8.200px;color:#222">Product</div>
<div class="a" style="left:1px;top:390px;width:28px;height:13px;border:1px solid #eee;border-right-color:#bbb;border-bottom:2px solid #ccc;background:#fff;text-align:center;font-size:9px;line-height:12.500px;color:#333">4</div>
<div class="t" style="left:35px;top:395px;font-size:8.200px;color:#222">Extend_Area</div>
<div class="a" style="left:1px;top:404px;width:28px;height:13px;border:1px solid #eee;border-right-color:#bbb;border-bottom:2px solid #ccc;background:#fff;text-align:center;font-size:9px;line-height:12.500px;color:#333">5</div>
<div class="t" style="left:35px;top:409px;font-size:8.200px;color:#222">Extend_Surface</div>
<div class="a" style="left:1px;top:418px;width:28px;height:14px;border:2px solid #222;background:#fff;text-align:center;font-size:9px;font-weight:bold;line-height:11.500px;color:#111">8</div>
<div class="a" style="left:1px;top:432px;width:28px;height:13px;border:1px solid #eee;border-right-color:#bbb;border-bottom:2px solid #ccc;background:#fff;text-align:center;font-size:9px;line-height:12.500px;color:#333">100</div>
<div class="t" style="left:35px;top:437px;font-size:8.200px;color:#222">3DPFAreaLine</div>
<div class="a" style="left:1px;top:446px;width:28px;height:13px;border:1px solid #eee;border-right-color:#bbb;border-bottom:2px solid #ccc;background:#fff;text-align:center;font-size:9px;line-height:12.500px;color:#333">101</div>
<div class="t" style="left:35px;top:451px;font-size:8.200px;color:#222">AreaPoint</div>
<div class="a" style="left:1px;top:460px;width:28px;height:13px;border:1px solid #eee;border-right-color:#bbb;border-bottom:2px solid #ccc;background:#fff;text-align:center;font-size:9px;line-height:12.500px;color:#333">102</div>
<div class="t" style="left:35px;top:465px;font-size:8.200px;color:#222">3DPFAreaLine...</div>
<div class="a" style="left:1px;top:474px;width:28px;height:13px;border:1px solid #eee;border-right-color:#bbb;border-bottom:2px solid #ccc;background:#fff;text-align:center;font-size:9px;line-height:12.500px;color:#333">200</div>
<div class="t" style="left:35px;top:479px;font-size:8.200px;color:#222">Area</div>
<div class="a" style="left:1px;top:488px;width:28px;height:13px;border:1px solid #eee;border-right-color:#bbb;border-bottom:2px solid #ccc;background:#fff;text-align:center;font-size:9px;line-height:12.500px;color:#333">310</div>
<div class="t" style="left:35px;top:493px;font-size:8.200px;color:#222">Punch use</div>
<div class="a" style="left:1px;top:502px;width:28px;height:13px;border:1px solid #eee;border-right-color:#bbb;border-bottom:2px solid #ccc;background:#fff;text-align:center;font-size:9px;line-height:12.500px;color:#333">311</div>
<div class="t" style="left:35px;top:507px;font-size:8.200px;color:#222">Material</div>
<div class="a" style="left:172px;top:363px;width:12px;height:152px;background:#f4f4f4"></div>
<div class="a" style="left:173px;top:364px;width:10px;height:112px;background:linear-gradient(90deg,#f6f6f6,#dcdcdc);border:1px solid #c4c4c4;border-radius:2px"></div>
<div class="a" style="left:176px;top:415px;width:4px;height:1px;background:#666;box-shadow:0 2px 0 #666,0 4px 0 #666"></div>
<div class="a" style="left:175px;top:354px;border:3px solid transparent;border-bottom:3px solid #444;border-top:0"></div>
<div class="a" style="left:175px;top:510px;border:3px solid transparent;border-top:3px solid #444;border-bottom:0"></div>
<div class="a" style="left:31px;top:527px;width:154px;height:13px;background:#fff;border-top:1px solid #777;border-left:1px solid #777;overflow:hidden"><div class="t" style="left:3px;top:2px;font-size:7.300px;color:#444">Name:Layer Saving location: [H:'customer\TO'</div></div>
<div class="a" style="left:0;top:541px;width:186px;height:16px;background:#f9f9f9"></div>
<div class="a" style="left:60px;top:541px;width:62px;height:14px;background:#fff;border:1px solid #d0d0d0;border-top:0"></div>
<div class="t" style="left:4px;top:544px;font-size:8.300px;color:#555">HistoryOperat_</div>
<div class="t" style="left:64px;top:544px;font-size:8.300px;color:#444">LayerOperatio._</div>
<div class="t" style="left:125px;top:544px;font-size:8.300px;color:#555">SketchOperat_</div>

</div>
<div class="a" style="left:192px;top:115px;width:1088px;height:17px;background:#f4f4f4"></div>
<div class="a" style="left:186px;top:115px;width:6px;height:557px;background:linear-gradient(90deg,#eee 0,#eee 50%,#c8c8c8 50%,#c8c8c8 66%,#fff 66%)"></div>
<div class="a" style="left:193px;top:116px;width:133px;height:16px;background:#fff;border:1px solid #dcdcdc;border-bottom:0"></div>
<svg class="a" style="left:194px;top:117px" width="12" height="14" viewBox="0 0 12 14"><path d="M4 1h6v12h-6z" fill="#fff" stroke="#444" stroke-width=".8"/><path d="M5 3l3.500 2v4l-3.500 2l-3.500-2v-4z" fill="#8a1010"/><path d="M5 3l3.500 2v4l-3.500 2z" fill="#111"/></svg>
<div class="t" style="left:206px;top:119px;font-size:8.300px;font-weight:bold;color:#222;letter-spacing:.25px">[1] V11.0_3DPRF_1_$0.main</div>
<svg class="a" style="left:1254px;top:118px" width="24" height="10" viewBox="0 0 24 10"><path d="M7 2v6l-3.500-3z" fill="#ddd" stroke="#999" stroke-width=".7"/><path d="M16 2v6l3.500-3z" fill="#fff" stroke="#888" stroke-width=".7"/></svg>
<div id="vp" class="a" style="left:192px;top:131px;width:1085px;height:537px;background:linear-gradient(#333 0%,#333 50%,#555 100%);border-top:1px solid #1c1c1c;border-left:1px solid #1c1c1c;overflow:hidden">
<!--MODEL_START--><svg class="a" style="left:-193px;top:-132px" width="1280" height="720" viewBox="0 0 1280 720">
<polygon points="488.0,402.0 514.0,401.0 515.0,303.0 543.0,286.0 572.0,301.0 577.5,307.5 580.0,305.0 687.5,244.0 687.5,225.0 710.0,212.5 739.0,229.0 739.0,239.0 745.0,242.5 745.0,254.0 740.0,257.0 759.0,268.0 759.0,264.0 775.0,255.0 789.0,261.0 790.0,256.0 796.0,254.0 814.0,260.0 832.5,247.5 856.0,262.5 860.0,277.5 867.5,287.5 879.0,304.0 879.0,312.5 872.0,317.0 880.0,316.0 899.0,327.5 899.0,350.0 919.0,361.0 944.0,347.0 971.0,364.0 971.0,375.0 977.5,376.0 977.5,409.0 961.0,416.0 961.0,499.0 910.0,529.0 900.0,532.5 900.0,562.5 892.5,567.5 885.0,563.0 867.5,576.0 860.0,572.0 852.5,577.0 852.5,585.0 815.0,605.0 810.0,601.0 787.5,612.5 779.0,619.0 740.0,601.0 727.5,606.0 706.0,596.0 705.0,591.0 692.5,586.0 692.5,573.0 680.0,577.5 652.5,562.5 650.0,554.0 640.0,556.0 620.0,551.0 612.5,545.0 610.0,536.0 572.5,515.0 571.0,505.0 560.0,509.0 534.0,494.0 512.5,485.0 511.0,467.5 499.0,461.0 488.0,452.0" fill="#a217aa" stroke="#4a0855" stroke-width=".45"/>
<polygon points="541.0,353.0 551.2,340.5 578.8,306.2 687.5,243.8 716.2,242.5 730.0,253.8 758.8,268.8 760.0,287.5 682.5,330.0 676.2,336.2 594.0,382.0" fill="#b61cbb" stroke="#4a0855" stroke-width=".45"/>
<polygon points="682.5,330.0 760.0,287.5 760.0,303.8 677.5,352.5 676.2,336.2" fill="#680a70" stroke="#4a0855" stroke-width=".45"/>
<polygon points="545.0,317.5 572.5,301.2 572.5,310.0 555.0,321.2 552.5,335.0 545.0,337.5" fill="#680a70" stroke="#4a0855" stroke-width=".45"/>
<polygon points="515.0,302.5 542.5,286.2 572.5,301.2 545.0,317.5" fill="#b61cbb" stroke="#4a0855" stroke-width=".45"/>
<path d="M528.8 294.4L558.8 309.4M557.5 293.8L530.0 310.0" stroke="#f3c6f3" stroke-width=".7" stroke-dasharray="1.6 1.4" fill="none"/>
<polygon points="551.2,323.8 577.5,307.5 601.8,318.8 573.8,336.2" fill="#b61cbb" stroke="#4a0855" stroke-width=".45"/>
<path d="M564.4 315.6L587.8 327.5M589.6 313.1L562.5 330.0" stroke="#f3c6f3" stroke-width=".7" stroke-dasharray="1.6 1.4" fill="none"/>
<polygon points="573.8,336.2 601.8,318.8 601.8,335.0 573.8,352.0" fill="#680a70" stroke="#4a0855" stroke-width=".45"/>
<path d="M587.8 327.5L587.8 343.5M601.8 326.9L573.8 344.1" stroke="#f3c6f3" stroke-width=".7" stroke-dasharray="1.6 1.4" fill="none"/>
<polygon points="551.2,323.8 573.8,336.2 573.8,352.0 551.2,340.0" fill="#a217aa" stroke="#4a0855" stroke-width=".45"/>
<path d="M562.5 330.0L562.5 346.0M573.8 344.1L551.2 331.9" stroke="#f3c6f3" stroke-width=".7" stroke-dasharray="1.6 1.4" fill="none"/>
<polygon points="687.5,225.0 716.2,242.5 716.2,258.0 687.5,243.8" fill="#a217aa" stroke="#4a0855" stroke-width=".45"/>
<path d="M701.9 233.8L701.9 250.9M716.2 250.2L687.5 234.4" stroke="#f3c6f3" stroke-width=".7" stroke-dasharray="1.6 1.4" fill="none"/>
<polygon points="716.2,242.5 738.8,228.8 738.8,246.2 730.0,253.8 716.2,258.0" fill="#680a70" stroke="#4a0855" stroke-width=".45"/>
<polygon points="687.5,225.0 710.0,212.5 738.8,228.8 716.2,242.5" fill="#b61cbb" stroke="#4a0855" stroke-width=".45"/>
<path d="M698.8 218.8L727.5 235.6M724.4 220.6L701.9 233.8" stroke="#f3c6f3" stroke-width=".7" stroke-dasharray="1.6 1.4" fill="none"/>
<polygon points="737.5,246.2 745.0,242.5 745.0,253.8 737.5,258.0" fill="#680a70" stroke="#4a0855" stroke-width=".45"/>
<path d="M741.2 244.4L741.2 255.9M745.0 248.1L737.5 252.1" stroke="#f3c6f3" stroke-width=".7" stroke-dasharray="1.6 1.4" fill="none"/>
<polygon points="738.8,239.2 745.0,242.5 741.2,245.0 738.8,243.8" fill="#b61cbb" stroke="#4a0855" stroke-width=".45"/>
<polygon points="660.0,295.5 701.2,271.2 712.5,270.8 722.0,276.2 721.2,285.0 685.5,306.2 672.5,307.0 662.0,301.2" fill="#680a70" stroke="#4a0855" stroke-width=".45"/>
<polygon points="670.0,300.0 705.0,280.0 716.2,280.5 721.2,285.0 685.5,306.2 673.8,306.2" fill="#a217aa" stroke="#4a0855" stroke-width=".45"/>
<polygon points="660.0,295.5 701.2,271.2 712.5,270.8 722.0,276.2 720.0,279.5 711.2,275.0 702.5,275.5 665.0,298.0" fill="#53065a" stroke="#4a0855" stroke-width=".45"/>
<ellipse cx="613.8" cy="305.0" rx="13" ry="7.5" fill="#680a70" stroke="#4a0855" stroke-width=".4"/>
<ellipse cx="613.8" cy="307.0" rx="11" ry="5.5" fill="#a217aa" stroke="#4a0855" stroke-width=".4"/>
<polygon points="602.5,331.2 657.5,301.2 658.0,303.0 603.0,333.2" fill="#53065a" stroke="#4a0855" stroke-width=".45"/>
<polygon points="758.8,264.5 773.8,255.5 790.0,262.0 772.5,272.5" fill="#b61cbb" stroke="#4a0855" stroke-width=".45"/>
<path d="M766.2 260.0L781.2 267.2M781.9 258.8L765.6 268.5" stroke="#f3c6f3" stroke-width=".7" stroke-dasharray="1.6 1.4" fill="none"/>
<polygon points="758.8,264.5 772.5,272.5 772.5,300.0 758.8,293.0" fill="#a217aa" stroke="#4a0855" stroke-width=".45"/>
<path d="M765.6 268.5L765.6 296.5M772.5 286.2L758.8 278.8" stroke="#f3c6f3" stroke-width=".7" stroke-dasharray="1.6 1.4" fill="none"/>
<polygon points="772.5,272.5 790.0,262.0 790.0,290.0 772.5,300.0" fill="#680a70" stroke="#4a0855" stroke-width=".45"/>
<path d="M781.2 267.2L781.2 295.0M790.0 276.0L772.5 286.2" stroke="#f3c6f3" stroke-width=".7" stroke-dasharray="1.6 1.4" fill="none"/>
<polygon points="594.0,438.0 676.0,363.0 677.0,354.0 760.0,305.0 775.0,300.0 865.0,330.0 899.0,350.0 919.0,361.0 947.0,392.0 835.0,452.0 729.0,498.0 714.0,505.0 675.0,485.0 640.0,461.0 601.0,442.5" fill="#b61cbb" stroke="#4a0855" stroke-width=".45"/>
<polygon points="594.0,382.0 676.0,337.0 676.0,363.0 594.0,438.0" fill="#680a70" stroke="#4a0855" stroke-width=".45"/>
<path d="M635.0 359.5L635.0 400.5M676.0 350.0L594.0 410.0" stroke="#f3c6f3" stroke-width=".7" stroke-dasharray="1.6 1.4" fill="none"/>
<polygon points="593.8,437.5 635.0,402.5 642.5,400.0 677.5,420.0 670.0,432.5 656.2,448.8 640.0,461.2 601.2,442.5" fill="#b61cbb" stroke="#4a0855" stroke-width=".45"/>
<polygon points="601.2,442.5 640.0,461.2 656.2,450.0 656.2,522.5 640.0,515.0 601.2,495.0" fill="#a217aa" stroke="#4a0855" stroke-width=".45"/>
<polygon points="633.8,422.5 648.8,405.0 660.0,400.0 670.0,405.0 670.0,412.5 653.8,430.0 641.2,432.5 634.5,427.5" fill="#680a70" stroke="#4a0855" stroke-width=".45"/>
<polygon points="642.5,425.0 656.2,410.0 667.5,407.5 670.0,412.5 653.8,430.0 643.8,431.2" fill="#a217aa" stroke="#4a0855" stroke-width=".45"/>
<polygon points="667.5,451.2 680.0,441.2 707.5,425.0 707.5,448.8 685.0,462.5 673.8,485.0 673.8,525.0 667.5,527.5" fill="#680a70" stroke="#4a0855" stroke-width=".45"/>
<polygon points="655.0,450.0 667.5,451.2 667.5,527.5 655.0,522.5" fill="#a217aa" stroke="#4a0855" stroke-width=".45"/>
<path d="M661.2 450.6L661.2 525.0M667.5 489.4L655.0 486.2" stroke="#f3c6f3" stroke-width=".7" stroke-dasharray="1.6 1.4" fill="none"/>
<polygon points="656.2,448.8 672.5,435.0 682.5,440.0 667.5,451.2" fill="#b61cbb" stroke="#4a0855" stroke-width=".45"/>
<path d="M664.4 441.9L675.0 445.6M677.5 437.5L661.9 450.0" stroke="#f3c6f3" stroke-width=".7" stroke-dasharray="1.6 1.4" fill="none"/>
<polygon points="715.6,470.0 733.8,447.5 743.8,444.4 751.2,446.9 730.0,461.2 729.4,479.4 721.2,477.5" fill="#680a70" stroke="#4a0855" stroke-width=".45"/>
<polygon points="729.4,461.9 751.2,446.9 757.5,443.8 757.5,460.0 775.0,468.1 758.1,476.2" fill="#b61cbb" stroke="#4a0855" stroke-width=".45"/>
<polygon points="729.4,462.2 758.1,476.2 758.1,547.5 729.4,535.0" fill="#a217aa" stroke="#4a0855" stroke-width=".45"/>
<path d="M743.8 469.2L743.8 541.2M758.1 511.9L729.4 498.6" stroke="#f3c6f3" stroke-width=".7" stroke-dasharray="1.6 1.4" fill="none"/>
<polygon points="758.1,476.2 775.0,468.1 775.0,542.5 758.1,547.5" fill="#680a70" stroke="#4a0855" stroke-width=".45"/>
<path d="M766.6 472.2L766.6 545.0M775.0 505.3L758.1 511.9" stroke="#f3c6f3" stroke-width=".7" stroke-dasharray="1.6 1.4" fill="none"/>
<polygon points="757.5,443.1 782.5,455.6 782.5,475.0 775.0,472.5 775.0,468.1 757.5,460.0" fill="#a217aa" stroke="#4a0855" stroke-width=".45"/>
<polygon points="782.5,455.6 810.6,440.0 810.6,446.2 796.2,453.8 788.8,459.4 788.8,475.0 782.5,475.0" fill="#680a70" stroke="#4a0855" stroke-width=".45"/>
<polygon points="757.5,443.1 785.0,426.9 810.6,440.0 782.5,455.6" fill="#b61cbb" stroke="#4a0855" stroke-width=".45"/>
<path d="M771.2 435.0L796.6 447.8M797.8 433.4L770.0 449.4" stroke="#f3c6f3" stroke-width=".7" stroke-dasharray="1.6 1.4" fill="none"/>
<polygon points="788.8,459.4 815.0,443.8 843.1,460.0 815.0,475.0" fill="#b61cbb" stroke="#4a0855" stroke-width=".45"/>
<path d="M801.9 451.6L829.1 467.5M829.1 451.9L801.9 467.2" stroke="#f3c6f3" stroke-width=".7" stroke-dasharray="1.6 1.4" fill="none"/>
<polygon points="788.8,459.4 815.0,475.0 815.0,553.8 788.8,547.5" fill="#a217aa" stroke="#4a0855" stroke-width=".45"/>
<path d="M801.9 467.2L801.9 550.6M815.0 514.4L788.8 503.4" stroke="#f3c6f3" stroke-width=".7" stroke-dasharray="1.6 1.4" fill="none"/>
<polygon points="815.0,475.0 843.1,460.0 843.1,535.0 815.0,553.8" fill="#680a70" stroke="#4a0855" stroke-width=".45"/>
<path d="M829.1 467.5L829.1 544.4M843.1 497.5L815.0 514.4" stroke="#f3c6f3" stroke-width=".7" stroke-dasharray="1.6 1.4" fill="none"/>
<ellipse cx="835.6" cy="430.6" rx="12.5" ry="7.5" fill="#680a70" stroke="#4a0855" stroke-width=".4"/>
<ellipse cx="836.9" cy="432.5" rx="10" ry="5.5" fill="#a217aa" stroke="#4a0855" stroke-width=".4"/>
<polygon points="835.0,452.5 947.5,392.5 947.5,500.0 835.0,500.0" fill="#680a70" stroke="#4a0855" stroke-width=".45"/>
<path d="M891.2 422.5L891.2 500.0M947.5 446.2L835.0 476.2" stroke="#f3c6f3" stroke-width=".7" stroke-dasharray="1.6 1.4" fill="none"/>
<polygon points="947.5,380.0 971.2,363.8 971.2,375.0 977.5,376.2 977.5,408.8 961.2,416.2 961.2,500.0 947.5,500.0" fill="#680a70" stroke="#4a0855" stroke-width=".45"/>
<polygon points="875.0,451.2 902.5,436.2 902.5,500.0 875.0,500.0" fill="#53065a" stroke="#4a0855" stroke-width=".45"/>
<path d="M888.8 443.8L888.8 500.0M902.5 468.1L875.0 475.6" stroke="#f3c6f3" stroke-width=".7" stroke-dasharray="1.6 1.4" fill="none"/>
<polygon points="907.5,433.8 943.8,413.8 943.8,486.2 907.5,500.0" fill="#53065a" stroke="#4a0855" stroke-width=".45"/>
<path d="M925.6 423.8L925.6 493.1M943.8 450.0L907.5 466.9" stroke="#f3c6f3" stroke-width=".7" stroke-dasharray="1.6 1.4" fill="none"/>
<polygon points="943.8,408.8 951.2,405.0 951.2,495.0 943.8,491.2" fill="#a217aa" stroke="#4a0855" stroke-width=".45"/>
<path d="M947.5 406.9L947.5 493.1M951.2 450.0L943.8 450.0" stroke="#f3c6f3" stroke-width=".7" stroke-dasharray="1.6 1.4" fill="none"/>
<polygon points="835.0,456.2 870.0,437.5 870.0,445.0 835.0,463.8" fill="#a217aa" stroke="#4a0855" stroke-width=".45"/>
<path d="M852.5 446.9L852.5 454.4M870.0 441.2L835.0 460.0" stroke="#f3c6f3" stroke-width=".7" stroke-dasharray="1.6 1.4" fill="none"/>
<polygon points="918.8,361.2 943.8,347.0 971.2,363.8 947.5,380.0" fill="#b61cbb" stroke="#4a0855" stroke-width=".45"/>
<path d="M931.2 354.1L959.4 371.9M957.5 355.4L933.1 370.6" stroke="#f3c6f3" stroke-width=".7" stroke-dasharray="1.6 1.4" fill="none"/>
<polygon points="918.8,361.2 947.5,380.0 947.5,393.0 920.0,378.0" fill="#a217aa" stroke="#4a0855" stroke-width=".45"/>
<path d="M933.1 370.6L933.8 385.5M947.5 386.5L919.4 369.6" stroke="#f3c6f3" stroke-width=".7" stroke-dasharray="1.6 1.4" fill="none"/>
<polygon points="865.0,326.2 880.0,318.8 898.8,327.5 885.0,335.0" fill="#b61cbb" stroke="#4a0855" stroke-width=".45"/>
<path d="M872.5 322.5L891.9 331.2M889.4 323.1L875.0 330.6" stroke="#f3c6f3" stroke-width=".7" stroke-dasharray="1.6 1.4" fill="none"/>
<polygon points="865.0,326.2 885.0,335.0 885.0,357.5 865.0,347.5" fill="#a217aa" stroke="#4a0855" stroke-width=".45"/>
<path d="M875.0 330.6L875.0 352.5M885.0 346.2L865.0 336.9" stroke="#f3c6f3" stroke-width=".7" stroke-dasharray="1.6 1.4" fill="none"/>
<polygon points="885.0,335.0 898.8,327.5 898.8,348.8 885.0,357.5" fill="#680a70" stroke="#4a0855" stroke-width=".45"/>
<path d="M891.9 331.2L891.9 353.1M898.8 338.1L885.0 346.2" stroke="#f3c6f3" stroke-width=".7" stroke-dasharray="1.6 1.4" fill="none"/>
<polygon points="800.0,391.2 832.5,372.5 845.0,373.0 856.2,381.2 855.0,388.8 822.5,403.8 810.0,403.8 801.2,397.5" fill="#680a70" stroke="#4a0855" stroke-width=".45"/>
<polygon points="813.8,395.0 835.0,383.8 847.5,384.5 855.0,388.8 822.5,403.8 813.8,402.5" fill="#a217aa" stroke="#4a0855" stroke-width=".45"/>
<polygon points="800.0,391.2 832.5,372.5 845.0,373.0 856.2,381.2 853.8,383.8 843.8,377.5 833.8,378.0 803.8,394.5" fill="#53065a" stroke="#4a0855" stroke-width=".45"/>
<polygon points="835.0,451.2 878.8,427.0 879.5,429.0 835.8,453.2" fill="#53065a" stroke="#4a0855" stroke-width=".45"/>
<polygon points="875.0,440.0 961.2,440.0 961.2,498.8 910.0,528.8 900.0,533.0 900.0,515.0 875.0,502.5" fill="#680a70" stroke="#4a0855" stroke-width=".45"/>
<polygon points="907.5,440.0 943.8,440.0 943.8,487.5 907.5,506.2" fill="#53065a" stroke="#4a0855" stroke-width=".45"/>
<path d="M925.6 440.0L925.6 496.9M943.8 463.8L907.5 473.1" stroke="#f3c6f3" stroke-width=".7" stroke-dasharray="1.6 1.4" fill="none"/>
<polygon points="875.0,440.0 902.5,440.0 902.5,502.5 875.0,490.0" fill="#53065a" stroke="#4a0855" stroke-width=".45"/>
<path d="M888.8 440.0L888.8 496.2M902.5 471.2L875.0 465.0" stroke="#f3c6f3" stroke-width=".7" stroke-dasharray="1.6 1.4" fill="none"/>
<polygon points="946.2,440.0 952.5,440.0 952.5,491.2 946.2,493.8" fill="#a217aa" stroke="#4a0855" stroke-width=".45"/>
<path d="M949.4 440.0L949.4 492.5M952.5 465.6L946.2 466.9" stroke="#f3c6f3" stroke-width=".7" stroke-dasharray="1.6 1.4" fill="none"/>
<polygon points="902.5,512.5 950.0,487.5 960.0,491.2 960.0,498.8 910.0,528.0" fill="#a217aa" stroke="#4a0855" stroke-width=".45"/>
<polygon points="815.0,475.0 843.0,460.0 843.0,490.0 836.2,497.5 823.8,505.0 823.8,600.0 815.0,605.0" fill="#680a70" stroke="#4a0855" stroke-width=".45"/>
<polygon points="823.8,505.0 836.2,497.5 853.8,512.5 853.8,540.0 823.8,557.5" fill="#53065a" stroke="#4a0855" stroke-width=".45"/>
<polygon points="835.0,498.8 850.0,488.8 872.5,481.2 900.0,505.5 876.2,522.5 853.8,512.5" fill="#b61cbb" stroke="#4a0855" stroke-width=".45"/>
<polygon points="835.0,498.8 853.8,512.5 876.2,522.5 876.2,531.2 853.8,521.2 835.0,506.2" fill="#a217aa" stroke="#4a0855" stroke-width=".45"/>
<polygon points="876.2,522.5 900.0,505.5 900.0,533.0 892.5,522.5 876.2,531.2" fill="#680a70" stroke="#4a0855" stroke-width=".45"/>
<ellipse cx="875.0" cy="499.5" rx="3.5" ry="2.5" fill="#680a70" stroke="#4a0855" stroke-width=".4"/>
<polygon points="853.8,521.2 876.2,531.2 892.5,522.5 900.0,533.0 900.0,562.5 892.5,567.5 885.0,562.5 885.0,550.0 872.5,550.0 853.8,540.0" fill="#a217aa" stroke="#4a0855" stroke-width=".45"/>
<polygon points="892.5,522.5 900.0,533.0 900.0,562.5 892.5,567.5" fill="#680a70" stroke="#4a0855" stroke-width=".45"/>
<path d="M896.2 527.8L896.2 565.0M900.0 547.8L892.5 545.0" stroke="#f3c6f3" stroke-width=".7" stroke-dasharray="1.6 1.4" fill="none"/>
<polygon points="823.8,557.5 853.8,540.0 872.5,550.0 885.0,557.5 885.0,562.5 867.5,576.2 852.5,570.0 840.0,576.2 830.0,570.0" fill="#b61cbb" stroke="#4a0855" stroke-width=".45"/>
<polygon points="852.5,570.0 867.5,576.2 867.5,580.0 852.5,585.5" fill="#680a70" stroke="#4a0855" stroke-width=".45"/>
<path d="M860.0 573.1L860.0 582.8M867.5 578.1L852.5 577.8" stroke="#f3c6f3" stroke-width=".7" stroke-dasharray="1.6 1.4" fill="none"/>
<polygon points="830.0,570.0 840.0,576.2 852.5,570.0 852.5,585.5 815.0,605.0 815.0,600.0 823.8,595.0 823.8,565.0" fill="#680a70" stroke="#4a0855" stroke-width=".45"/>
<ellipse cx="847.5" cy="558.8" rx="8" ry="5" fill="#680a70" stroke="#4a0855" stroke-width=".4"/>
<ellipse cx="848.8" cy="560.0" rx="5" ry="3" fill="#b61cbb" stroke="#4a0855" stroke-width=".4"/>
<polygon points="860.0,557.5 875.0,551.2 885.0,557.5 867.5,565.0" fill="#b61cbb" stroke="#4a0855" stroke-width=".45"/>
<path d="M867.5 554.4L876.2 561.2M880.0 554.4L863.8 561.2" stroke="#f3c6f3" stroke-width=".7" stroke-dasharray="1.6 1.4" fill="none"/>
<polygon points="867.5,565.0 885.0,557.5 885.0,562.5 867.5,576.2" fill="#680a70" stroke="#4a0855" stroke-width=".45"/>
<path d="M876.2 561.2L876.2 569.4M885.0 560.0L867.5 570.6" stroke="#f3c6f3" stroke-width=".7" stroke-dasharray="1.6 1.4" fill="none"/>
<polygon points="538.8,445.0 566.2,430.0 566.2,467.5 552.5,476.2 538.8,483.8" fill="#680a70" stroke="#4a0855" stroke-width=".45"/>
<polygon points="538.8,483.8 566.2,468.0 600.0,486.2 590.0,496.2 571.2,490.0 563.8,508.0 537.0,495.5" fill="#b61cbb" stroke="#4a0855" stroke-width=".45"/>
<ellipse cx="580.0" cy="491.2" rx="9" ry="5.5" fill="#680a70" stroke="#4a0855" stroke-width=".4"/>
<ellipse cx="581.2" cy="493.0" rx="6" ry="3.2" fill="#b61cbb" stroke="#4a0855" stroke-width=".4"/>
<polygon points="593.8,515.0 617.5,467.5 625.0,470.0 600.0,518.0" fill="#b61cbb" stroke="#4a0855" stroke-width=".45"/>
<path d="M605.6 491.2L612.5 494.0M621.2 468.8L596.9 516.5" stroke="#f3c6f3" stroke-width=".7" stroke-dasharray="1.6 1.4" fill="none"/>
<polygon points="600.0,518.0 625.0,470.0 625.0,498.8 611.2,508.0" fill="#680a70" stroke="#4a0855" stroke-width=".45"/>
<path d="M612.5 494.0L618.1 503.4M625.0 484.4L605.6 513.0" stroke="#f3c6f3" stroke-width=".7" stroke-dasharray="1.6 1.4" fill="none"/>
<polygon points="611.2,508.8 625.0,500.0 640.0,507.0 655.0,517.5 656.2,550.0 640.0,556.2 620.0,551.2 612.0,540.0 610.0,526.2 591.2,515.0 600.0,518.0" fill="#b61cbb" stroke="#4a0855" stroke-width=".45"/>
<ellipse cx="635.0" cy="526.2" rx="7" ry="4.2" fill="#680a70" stroke="#4a0855" stroke-width=".4"/>
<ellipse cx="635.5" cy="527.2" rx="5" ry="2.6" fill="#a217aa" stroke="#4a0855" stroke-width=".4"/>
<polygon points="612.0,540.0 620.0,551.2 640.0,556.2 640.0,545.0 620.0,540.0 612.0,530.0" fill="#a217aa" stroke="#4a0855" stroke-width=".45"/>
<polygon points="655.0,450.0 665.0,453.8 665.0,530.5 655.0,525.5" fill="#a217aa" stroke="#4a0855" stroke-width=".45"/>
<path d="M660.0 451.9L660.0 528.0M665.0 492.1L655.0 487.8" stroke="#f3c6f3" stroke-width=".7" stroke-dasharray="1.6 1.4" fill="none"/>
<polygon points="665.0,453.8 687.5,440.0 687.5,511.2 675.0,520.5 665.0,530.5" fill="#680a70" stroke="#4a0855" stroke-width=".45"/>
<polygon points="655.0,448.8 670.0,440.0 680.0,443.0 665.0,453.0" fill="#b61cbb" stroke="#4a0855" stroke-width=".45"/>
<path d="M662.5 444.4L672.5 448.0M675.0 441.5L660.0 450.9" stroke="#f3c6f3" stroke-width=".7" stroke-dasharray="1.6 1.4" fill="none"/>
<polygon points="656.2,550.0 683.8,505.0 691.2,508.8 665.0,555.5" fill="#b61cbb" stroke="#4a0855" stroke-width=".45"/>
<path d="M670.0 527.5L678.1 532.1M687.5 506.9L660.6 552.8" stroke="#f3c6f3" stroke-width=".7" stroke-dasharray="1.6 1.4" fill="none"/>
<polygon points="665.0,555.5 691.2,508.8 691.2,538.0 677.5,545.5" fill="#680a70" stroke="#4a0855" stroke-width=".45"/>
<path d="M678.1 532.1L684.4 541.8M691.2 523.4L671.2 550.5" stroke="#f3c6f3" stroke-width=".7" stroke-dasharray="1.6 1.4" fill="none"/>
<polygon points="665.0,555.5 680.0,547.5 700.0,557.0 702.5,570.0 680.0,578.0 652.5,563.0" fill="#b61cbb" stroke="#4a0855" stroke-width=".45"/>
<polygon points="652.5,563.0 680.0,578.0 680.0,565.0 660.0,557.5" fill="#a217aa" stroke="#4a0855" stroke-width=".45"/>
<path d="M666.2 570.5L670.0 561.2M680.0 571.5L656.2 560.2" stroke="#f3c6f3" stroke-width=".7" stroke-dasharray="1.6 1.4" fill="none"/>
<polygon points="702.5,513.0 730.0,497.0 757.5,510.5 730.0,526.8" fill="#b61cbb" stroke="#4a0855" stroke-width=".45"/>
<path d="M716.2 505.0L743.8 518.6M743.8 503.8L716.2 519.9" stroke="#f3c6f3" stroke-width=".7" stroke-dasharray="1.6 1.4" fill="none"/>
<polygon points="730.0,526.8 757.5,510.5 757.5,522.5 740.0,531.2 740.0,600.0 730.0,605.5" fill="#680a70" stroke="#4a0855" stroke-width=".45"/>
<polygon points="740.4,531.0 775.8,511.2 775.8,480.0 815.4,480.0 815.4,605.0 777.9,619.2 740.4,601.9" fill="#a217aa" stroke="#4a0855" stroke-width=".45"/>
<polygon points="815.4,480.0 823.8,480.0 823.8,599.8 815.4,605.0" fill="#680a70" stroke="#4a0855" stroke-width=".45"/>
<path d="M819.6 480.0L819.6 602.4M823.8 539.9L815.4 542.5" stroke="#f3c6f3" stroke-width=".7" stroke-dasharray="1.6 1.4" fill="none"/>
<polygon points="740.4,529.0 748.8,526.2 780.0,566.5 789.4,584.2 789.4,613.3 783.1,616.5 783.1,586.2 774.8,571.7 744.6,534.6" fill="#b61cbb" stroke="#4a0855" stroke-width=".45"/>
<polygon points="789.4,584.2 792.5,583.1 792.5,611.7 789.4,613.3" fill="#680a70" stroke="#4a0855" stroke-width=".45"/>
<polygon points="771.7,511.2 777.9,508.8 807.1,550.8 815.4,567.5 815.4,602.9 809.2,605.0 809.2,569.6 801.9,555.0" fill="#b61cbb" stroke="#4a0855" stroke-width=".45"/>
<ellipse cx="760.2" cy="580.0" rx="3.5" ry="3" fill="#680a70" stroke="#4a0855" stroke-width=".4"/>
<ellipse cx="790.4" cy="562.3" rx="3.5" ry="3" fill="#680a70" stroke="#4a0855" stroke-width=".4"/>
<polyline points="760.2,548.8 760.2,609.2" fill="none" stroke="#f3c6f3" stroke-width=".7" stroke-dasharray="1.6 1.4"/>
<polyline points="740.4,565.4 777.9,580.0" fill="none" stroke="#f3c6f3" stroke-width=".7" stroke-dasharray="1.6 1.4"/>
<polyline points="796.7,480.0 796.7,548.8" fill="none" stroke="#f3c6f3" stroke-width=".7" stroke-dasharray="1.6 1.4"/>
<polygon points="706.7,425.7 716.7,417.3 726.7,409.0 746.7,390.5 766.7,373.7 783.3,358.7 820.0,332.0 826.7,325.5 836.0,330.0 835.0,350.5 768.0,388.0 712.0,444.0 707.0,424.0" fill="#680a70" stroke="#4a0855" stroke-width=".45"/>
<polygon points="765.0,372.0 770.0,369.0 770.0,388.0 765.0,391.0" fill="#a217aa" stroke="#4a0855" stroke-width=".45"/>
<polygon points="826.2,317.5 836.2,325.0 857.5,335.0 865.0,330.0 865.0,360.0 855.0,365.0 826.2,350.0" fill="#a217aa" stroke="#4a0855" stroke-width=".45"/>
<polyline points="835.0,325.0 835.0,355.0" fill="none" stroke="#f3c6f3" stroke-width=".7" stroke-dasharray="1.6 1.4"/>
<polyline points="850.0,332.5 850.0,362.5" fill="none" stroke="#f3c6f3" stroke-width=".7" stroke-dasharray="1.6 1.4"/>
<polyline points="861.2,332.5 861.2,361.2" fill="none" stroke="#f3c6f3" stroke-width=".7" stroke-dasharray="1.6 1.4"/>
<polygon points="706.7,408.7 716.7,400.3 726.7,392.0 746.7,373.5 766.7,356.7 783.3,341.7 820.0,315.0 826.7,308.5 826.7,325.5 820.0,332.0 783.3,358.7 766.7,373.7 746.7,390.5 726.7,409.0 716.7,417.3 706.7,425.7" fill="#c9c9c9"/>
<polyline points="716.7,401.3 716.7,417.3" fill="none" stroke="#fff" stroke-width=".7" stroke-dasharray="1.6 1.4"/>
<polyline points="746.7,374.5 746.7,390.5" fill="none" stroke="#fff" stroke-width=".7" stroke-dasharray="1.6 1.4"/>
<polyline points="783.3,342.7 783.3,358.7" fill="none" stroke="#fff" stroke-width=".7" stroke-dasharray="1.6 1.4"/>
<polyline points="706.7,416.7 716.7,408.3 726.7,400.0 746.7,381.5 766.7,364.7 783.3,349.7 820.0,323.0 826.7,316.5" fill="none" stroke="#fff" stroke-width=".7" stroke-dasharray="1.6 1.4"/>
<polygon points="671.7,397.5 705.8,409.2 707.0,424.0 672.5,409.5" fill="#f2f2f2"/>
<polygon points="671.7,393.3 675.8,383.3 686.7,381.7 700.0,365.0 718.3,343.3 732.5,326.0 760.0,300.0 788.5,278.0 790.0,257.5 795.8,254.7 811.7,260.8 815.0,258.3 832.5,247.5 856.7,262.5 860.0,276.7 862.5,286.7 868.3,288.3 878.3,303.3 878.3,311.7 872.5,315.0 856.7,306.7 838.3,305.0 831.7,303.3 826.7,305.5 820.0,312.0 783.3,338.7 766.7,353.7 746.7,370.5 726.7,389.0 716.7,397.3 706.7,405.7" fill="#f3d3f3" stroke="#333" stroke-width=".45"/>
<polygon points="716.7,393.3 726.7,385.0 746.7,366.5 766.7,349.7 783.3,334.7 820.0,308.0 826.7,301.5 845.0,292.0 840.0,285.0 826.7,294.5 820.0,301.0 783.3,327.7 766.7,342.7 746.7,359.5 726.7,378.0 716.7,386.3" fill="#d6addb"/>
<polygon points="700.0,372.0 722.0,345.0 745.0,322.0 750.0,326.0 728.0,349.0 706.0,376.0" fill="#d6addb"/>
<polygon points="818.3,287.5 833.3,277.5 846.7,269.2 856.7,264.2 859.2,275.0 860.8,284.2 848.3,288.3 833.3,296.7 826.7,301.7" fill="#d6addb"/>
<polyline points="826.7,282.5 830.0,299.2" fill="none" stroke="#444" stroke-width="0.5"/>
<polyline points="833.3,278.3 837.5,294.2" fill="none" stroke="#444" stroke-width="0.5"/>
<polyline points="840.0,273.7 844.2,290.3" fill="none" stroke="#444" stroke-width="0.5"/>
<polyline points="846.7,269.7 850.8,287.5" fill="none" stroke="#444" stroke-width="0.5"/>
<polyline points="853.3,265.8 857.5,285.0" fill="none" stroke="#444" stroke-width="0.5"/>
<polyline points="818.3,287.5 856.7,264.2" fill="none" stroke="#333" stroke-width="0.5"/>
<polyline points="826.7,301.7 848.3,288.3 860.8,284.2" fill="none" stroke="#333" stroke-width="0.5"/>
<polyline points="840.0,305.0 856.7,296.7 866.7,290.0" fill="none" stroke="#555" stroke-width="0.4"/>
<polygon points="706.7,405.7 716.7,397.3 726.7,389.0 746.7,370.5 766.7,353.7 783.3,338.7 820.0,312.0 826.7,305.5 826.7,308.7 820.0,315.2 783.3,341.9 766.7,356.9 746.7,373.7 726.7,392.2 716.7,400.5 706.7,408.9" fill="#2ec8b8"/>
<polygon points="671.7,393.3 706.7,406.7 706.7,410.2 671.7,397.0" fill="#2ec8b8"/>
<polygon points="838.3,305.8 857.5,314.2 857.5,317.5 838.3,309.2" fill="#2ec8b8"/>
<polygon points="838.3,309.2 857.5,317.5 857.5,334.2 838.3,325.0" fill="#f2f2f2"/>
<polygon points="857.5,317.5 863.3,313.3 863.3,330.0 857.5,334.2" fill="#c9c9c9"/>
<polygon points="863.3,313.3 872.5,315.0 878.3,311.7 878.3,314.0 870.0,322.0 863.3,322.0" fill="#c9c9c9"/>
<polygon points="772.5,268.3 775.0,266.7 788.3,273.7 787.5,277.5" fill="#2ec8b8"/>
<polygon points="773.0,269.7 787.0,277.5 786.5,287.0 773.3,285.0" fill="#f2f2f2"/>
<polygon points="790.0,256.7 795.8,254.7 806.7,259.2 795.0,263.3 790.8,264.2" fill="#f2f2f2" stroke="#444" stroke-width=".45"/>
<ellipse cx="830.0" cy="264.2" rx="9" ry="6.3" fill="#c9a3cf" stroke="#4a0855" stroke-width=".4"/>
<ellipse cx="864.2" cy="307.5" rx="5.5" ry="4.5" fill="#bdbdbd" stroke="#4a0855" stroke-width=".4"/>
<polygon points="832.5,302.5 836.5,302.5 836.5,313.5 832.5,313.5" fill="#1428e0"/>
<polygon points="787.5,275.0 790.0,275.0 790.0,279.5 787.5,279.5" fill="#1428e0"/>
<polygon points="813.3,256.7 815.8,256.7 815.8,260.2 813.3,260.2" fill="#1428e0"/>
<polygon points="865.8,286.7 868.3,286.7 868.3,292.7 865.8,292.7" fill="#1428e0"/>
<polyline points="706.7,402.2 716.7,393.8 726.7,385.5 746.7,367.0 766.7,350.2 783.3,335.2 820.0,308.5 826.7,302.0 838.0,300.0" fill="none" stroke="#222" stroke-width="0.5"/>
<polyline points="706.7,394.2 716.7,385.8 726.7,377.5 746.7,359.0 766.7,342.2 783.3,327.2 820.0,300.5 826.7,294.0 846.0,291.0" fill="none" stroke="#222" stroke-width="0.5"/>
<polyline points="706.7,390.7 716.7,382.3 726.7,374.0 746.7,355.5 766.7,338.7 783.3,323.7 820.0,297.0 826.7,290.5 850.0,284.0" fill="none" stroke="#222" stroke-width="0.5"/>
<polyline points="680.0,387.0 703.0,368.0 722.0,347.0 736.0,331.0 763.0,305.0 790.0,283.0 806.0,270.0 832.0,252.0" fill="none" stroke="#222" stroke-width="0.5"/>
<polyline points="686.0,390.0 708.0,372.0 727.0,351.0 741.0,335.0 767.0,310.0 793.0,288.0 812.0,274.0 840.0,258.0" fill="none" stroke="#222" stroke-width="0.5"/>
<polyline points="700.0,365.0 716.0,396.0" fill="none" stroke="#666" stroke-width="0.4"/>
<polyline points="718.0,343.0 738.0,376.0" fill="none" stroke="#666" stroke-width="0.4"/>
<polyline points="740.0,320.0 760.0,357.0" fill="none" stroke="#666" stroke-width="0.4"/>
<polyline points="760.0,300.0 781.0,339.0" fill="none" stroke="#666" stroke-width="0.4"/>
<polyline points="788.0,278.0 810.0,317.0" fill="none" stroke="#666" stroke-width="0.4"/>
<polyline points="806.0,262.0 836.0,299.0" fill="none" stroke="#666" stroke-width="0.4"/>
<polyline points="822.0,254.0 856.0,284.0" fill="none" stroke="#666" stroke-width="0.4"/>
<polygon points="511.2,405.0 541.2,390.0 566.2,401.2 537.5,417.5" fill="#b61cbb" stroke="#4a0855" stroke-width=".45"/>
<path d="M526.2 397.5L551.9 409.4M553.8 395.6L524.4 411.2" stroke="#f3c6f3" stroke-width=".7" stroke-dasharray="1.6 1.4" fill="none"/>
<polygon points="537.5,417.5 566.2,401.2 566.2,472.5 537.5,485.0" fill="#680a70" stroke="#4a0855" stroke-width=".45"/>
<path d="M551.9 409.4L551.9 478.8M566.2 436.9L537.5 451.2" stroke="#f3c6f3" stroke-width=".7" stroke-dasharray="1.6 1.4" fill="none"/>
<polygon points="495.0,402.5 511.2,405.0 517.5,400.0 515.0,396.2" fill="#b61cbb" stroke="#4a0855" stroke-width=".45"/>
<path d="M503.1 403.8L516.2 398.1M514.4 402.5L505.0 399.4" stroke="#f3c6f3" stroke-width=".7" stroke-dasharray="1.6 1.4" fill="none"/>
<polygon points="593.8,436.2 593.8,382.5 595.0,382.0 595.0,437.0" fill="#680a70" stroke="#4a0855" stroke-width=".45"/>
<polyline points="600.0,297.5 632.5,316.2" fill="none" stroke="#f3c6f3" stroke-width=".7" stroke-dasharray="1.6 1.4"/>
<polyline points="652.5,310.0 683.8,330.0" fill="none" stroke="#f3c6f3" stroke-width=".7" stroke-dasharray="1.6 1.4"/>
<polyline points="701.2,270.0 731.2,253.8" fill="none" stroke="#f3c6f3" stroke-width=".7" stroke-dasharray="1.6 1.4"/>
<polyline points="676.8,337.0 677.5,352.5" fill="none" stroke="#f3c6f3" stroke-width=".7" stroke-dasharray="1.6 1.4"/>
<polyline points="515.0,366.2 540.0,380.0" fill="none" stroke="#f3c6f3" stroke-width=".7" stroke-dasharray="1.6 1.4"/>
<polyline points="543.0,319.5 543.0,350.0" fill="none" stroke="#f3c6f3" stroke-width=".7" stroke-dasharray="1.6 1.4"/>
<polyline points="630.0,325.0 655.0,310.0" fill="none" stroke="#f3c6f3" stroke-width=".7" stroke-dasharray="1.6 1.4"/>
<polyline points="730.0,253.8 758.8,268.8" fill="none" stroke="#f3c6f3" stroke-width=".7" stroke-dasharray="1.6 1.4"/>
<polyline points="627.5,281.2 600.0,297.5" fill="none" stroke="#f3c6f3" stroke-width=".7" stroke-dasharray="1.6 1.4"/>
<polyline points="593.8,410.0 660.0,372.5" fill="none" stroke="#f3c6f3" stroke-width=".7" stroke-dasharray="1.6 1.4"/>
<polyline points="566.2,417.5 593.8,431.2" fill="none" stroke="#f3c6f3" stroke-width=".7" stroke-dasharray="1.6 1.4"/>
<polyline points="597.5,437.0 665.5,368.0" fill="none" stroke="#f3c6f3" stroke-width=".7" stroke-dasharray="1.6 1.4"/>
<polyline points="620.0,447.5 655.0,413.8" fill="none" stroke="#f3c6f3" stroke-width=".7" stroke-dasharray="1.6 1.4"/>
<polyline points="515.0,366.2 540.0,380.0" fill="none" stroke="#f3c6f3" stroke-width=".7" stroke-dasharray="1.6 1.4"/>
<polyline points="630.0,396.2 652.5,407.5" fill="none" stroke="#f3c6f3" stroke-width=".7" stroke-dasharray="1.6 1.4"/>
<polyline points="760.0,397.5 800.0,416.2" fill="none" stroke="#f3c6f3" stroke-width=".7" stroke-dasharray="1.6 1.4"/>
<polyline points="850.0,426.2 920.0,388.8" fill="none" stroke="#f3c6f3" stroke-width=".7" stroke-dasharray="1.6 1.4"/>
<polyline points="770.0,392.5 790.0,402.5" fill="none" stroke="#f3c6f3" stroke-width=".7" stroke-dasharray="1.6 1.4"/>
<polyline points="842.5,420.0 922.5,380.0" fill="none" stroke="#f3c6f3" stroke-width=".7" stroke-dasharray="1.6 1.4"/>
<polyline points="875.0,482.5 943.8,445.0" fill="none" stroke="#f3c6f3" stroke-width=".7" stroke-dasharray="1.6 1.4"/>
<polyline points="902.5,436.2 902.5,500.0" fill="none" stroke="#f3c6f3" stroke-width=".7" stroke-dasharray="1.6 1.4"/>
<polyline points="865.0,420.0 900.0,437.5" fill="none" stroke="#f3c6f3" stroke-width=".7" stroke-dasharray="1.6 1.4"/>
<polyline points="767.5,392.5 805.0,410.0" fill="none" stroke="#f3c6f3" stroke-width=".7" stroke-dasharray="1.6 1.4"/>
<polyline points="903.0,440.0 903.0,502.5" fill="none" stroke="#f3c6f3" stroke-width=".7" stroke-dasharray="1.6 1.4"/>
<polyline points="875.0,477.5 943.8,443.8" fill="none" stroke="#f3c6f3" stroke-width=".7" stroke-dasharray="1.6 1.4"/>
<polyline points="947.5,440.0 947.5,487.5" fill="none" stroke="#f3c6f3" stroke-width=".7" stroke-dasharray="1.6 1.4"/>
<polyline points="710.0,515.0 710.0,590.0" fill="none" stroke="#f3c6f3" stroke-width=".7" stroke-dasharray="1.6 1.4"/>
<polyline points="732.5,525.0 732.5,600.0" fill="none" stroke="#f3c6f3" stroke-width=".7" stroke-dasharray="1.6 1.4"/>
<polyline points="787.5,465.0 787.5,545.0" fill="none" stroke="#f3c6f3" stroke-width=".7" stroke-dasharray="1.6 1.4"/>
<polyline points="760.0,470.0 760.0,545.0" fill="none" stroke="#f3c6f3" stroke-width=".7" stroke-dasharray="1.6 1.4"/>
<polyline points="498.8,440.0 498.8,462.5" fill="none" stroke="#f3c6f3" stroke-width=".7" stroke-dasharray="1.6 1.4"/>
<polyline points="536.2,455.0 536.2,492.5" fill="none" stroke="#f3c6f3" stroke-width=".7" stroke-dasharray="1.6 1.4"/>
<polyline points="552.5,447.5 552.5,475.0" fill="none" stroke="#f3c6f3" stroke-width=".7" stroke-dasharray="1.6 1.4"/>
<polyline points="601.2,450.0 601.2,480.0" fill="none" stroke="#f3c6f3" stroke-width=".7" stroke-dasharray="1.6 1.4"/>
<polyline points="658.8,455.0 658.8,525.0" fill="none" stroke="#f3c6f3" stroke-width=".7" stroke-dasharray="1.6 1.4"/>
<polyline points="662.5,455.0 662.5,527.5" fill="none" stroke="#f3c6f3" stroke-width=".7" stroke-dasharray="1.6 1.4"/>
<polyline points="708.8,515.0 708.8,590.0" fill="none" stroke="#f3c6f3" stroke-width=".7" stroke-dasharray="1.6 1.4"/>
<polyline points="732.5,530.0 732.5,602.5" fill="none" stroke="#f3c6f3" stroke-width=".7" stroke-dasharray="1.6 1.4"/>
<polyline points="737.5,527.5 737.5,600.0" fill="none" stroke="#f3c6f3" stroke-width=".7" stroke-dasharray="1.6 1.4"/>
<polyline points="512.5,472.5 533.8,483.8" fill="none" stroke="#f3c6f3" stroke-width=".7" stroke-dasharray="1.6 1.4"/>
<polyline points="573.8,512.5 610.0,530.0" fill="none" stroke="#f3c6f3" stroke-width=".7" stroke-dasharray="1.6 1.4"/>
<polyline points="652.5,562.5 680.0,576.2" fill="none" stroke="#f3c6f3" stroke-width=".7" stroke-dasharray="1.6 1.4"/>
<polyline points="705.0,550.0 730.0,562.5" fill="none" stroke="#f3c6f3" stroke-width=".7" stroke-dasharray="1.6 1.4"/>
<polyline points="567.5,477.5 652.5,520.0" fill="none" stroke="#f3c6f3" stroke-width=".7" stroke-dasharray="1.6 1.4"/>
</svg>
<!--MODEL_END-->
</div>
<svg class="a" style="left:205px;top:608px" width="48" height="34" viewBox="205 608 48 34">
<path d="M222.500 636v-12" stroke="#f8f020" stroke-width="1.300"/><path d="M220.500 625l2-5 2 5z" fill="#f8f020"/>
<text x="224.500" y="619" font-family="Liberation Sans,sans-serif" font-weight="bold" font-size="7.500" fill="#f0e830">Z</text>
<path d="M222.500 636l9-4" stroke="#c01818" stroke-width="1.200"/><path d="M228 631l6-1.500-4 4z" fill="#d01818"/>
<text x="238" y="628" font-family="Liberation Sans,sans-serif" font-size="7" fill="#b02828">X</text>
<path d="M222.500 636l-7-3" stroke="#8ab8e8" stroke-width="1"/><path d="M217.500 631l-4.500 0 2.500 3.500z" fill="#a8e0ff"/>
<text x="209" y="626" font-family="Liberation Sans,sans-serif" font-size="7" fill="#7a88b8">Y</text>
</svg>
<div class="a" style="left:1277px;top:131px;width:3px;height:541px;background:#f0f0f0"></div>
<svg class="a" style="left:510px;top:132px" width="450" height="26" viewBox="510 132 450 26">
<rect x="520.8" y="137" width="14.5" height="15" rx="1.500" fill="#eaf0fa"/>
<rect x="538.2" y="137" width="14.5" height="15" rx="1.500" fill="#eaf0fa"/>
<rect x="555.5" y="137" width="14.5" height="15" rx="1.500" fill="#eaf0fa"/>
<rect x="572.7" y="137" width="14.5" height="15" rx="1.500" fill="#eaf0fa"/>
<rect x="595.2" y="137" width="19.4" height="15" rx="1.500" fill="#eaf0fa"/>
<rect x="622.5" y="137" width="19.5" height="15" rx="1.500" fill="#eaf0fa"/>
<rect x="650.0" y="137" width="14.5" height="15" rx="1.500" fill="#eaf0fa"/>
<rect x="667.2" y="137" width="14.5" height="15" rx="1.500" fill="#eaf0fa"/>
<rect x="684.7" y="137" width="14.5" height="15" rx="1.500" fill="#eaf0fa"/>
<rect x="702.0" y="137" width="14.5" height="15" rx="1.500" fill="#eaf0fa"/>
<rect x="718.5" y="136" width="16.5" height="17" rx="1.500" fill="#cfe0f4" stroke="#4a7ac0" stroke-width="1"/>
<rect x="737.0" y="137" width="14.5" height="15" rx="1.500" fill="#eaf0fa"/>
<rect x="754.0" y="137" width="14.5" height="15" rx="1.500" fill="#eaf0fa"/>
<rect x="771.5" y="137" width="14.5" height="15" rx="1.500" fill="#eaf0fa"/>
<rect x="788.8" y="137" width="14.5" height="15" rx="1.500" fill="#eaf0fa"/>
<rect x="806.0" y="137" width="14.5" height="15" rx="1.500" fill="#eaf0fa"/>
<rect x="823.5" y="137" width="14.5" height="15" rx="1.500" fill="#eaf0fa"/>
<rect x="840.9" y="137" width="14.5" height="15" rx="1.500" fill="#eaf0fa"/>
<rect x="858.2" y="137" width="14.5" height="15" rx="1.500" fill="#eaf0fa"/>
<rect x="875.5" y="137" width="14.5" height="15" rx="1.500" fill="#eaf0fa"/>
<rect x="892.8" y="137" width="14.5" height="15" rx="1.500" fill="#eaf0fa"/>
<rect x="910.0" y="137" width="14.5" height="15" rx="1.500" fill="#eaf0fa"/>
<rect x="927.3" y="137" width="14.5" height="15" rx="1.500" fill="#eaf0fa"/>
<rect x="944.500" y="137" width="4" height="15" rx="1" fill="#eaf0fa"/><path d="M946.500 139v8M946.500 149v1.500" stroke="#444" stroke-width="1"/>
<path d="M591.2 136v17" stroke="#888" stroke-width="1.200"/>
<path d="M618.5 136v17" stroke="#888" stroke-width="1.200"/>
<path d="M646 136v17" stroke="#888" stroke-width="1.200"/>
<circle cx="526" cy="143" r="3.5" fill="#dff" stroke="#334" stroke-width="1"/><path d="M528.45 145.45l3.500 3.500" stroke="#445" stroke-width="1.500"/><path d="M524 143h4M526 141v4" stroke="#111" stroke-width="1"/><rect x="540" y="139.500" width="8" height="7" fill="none" stroke="#222" stroke-width=".8" stroke-dasharray="1.500 1"/><circle cx="545" cy="144" r="3" fill="#dff" stroke="#334" stroke-width="1"/><path d="M547.1 146.1l3.500 3.500" stroke="#445" stroke-width="1.500"/><path d="M558 140h4M560 138v4" stroke="#c02020" stroke-width="1.100"/><circle cx="563" cy="145" r="3" fill="#dff" stroke="#334" stroke-width="1"/><path d="M565.1 147.1l3.500 3.500" stroke="#445" stroke-width="1.500"/><rect x="574" y="144" width="5" height="6" fill="#e89030" stroke="#834" stroke-width=".6"/><circle cx="582" cy="142" r="2.500" fill="none" stroke="#55a" stroke-width="1"/><path d="M580 148h5l-1.500-1.500M585 148l-1.500 1.500" stroke="#c02020" stroke-width="1" fill="none"/><path d="M597 139h7v5h-7zM605 144h5v6h-5z" fill="#fff" stroke="#333" stroke-width=".7"/><path d="M597 147h4M599 147v4" stroke="#c02020" stroke-width="1"/><path d="M607 138v5M605.500 139.500l1.500-1.500 1.500 1.500" stroke="#333" stroke-width=".7" fill="none"/><path d="M611 143l1.500 2 1.500-2z" fill="#889"/><path d="M624 146c0-3 3-5 6-5s5 1 6 3l1 3c-2 2-10 3-13 1z" fill="#c01030" stroke="#601020" stroke-width=".5"/><path d="M628 143l3-1.500 3 1.500z" fill="#f8d0d8"/><path d="M638 143l1.500 2 1.500-2z" fill="#889"/><text x="651" y="145" font-family="Liberation Sans,sans-serif" font-size="5.500" font-weight="bold" fill="#333">TYPE</text><path d="M655 140h4v7l-2 3-2-3z" fill="#f0f080" opacity=".8"/><path d="M669.5 141.5l5-2.500 5 2.500v6l-5 2.500-5-2.500z" fill="#fff" stroke="#333" stroke-width=".8"/><path d="M669.5 141.5l5 2.500 5-2.500M674.5 144.0v6" fill="none" stroke="#333" stroke-width=".8"/><path d="M672 142l5 5" stroke="#333" stroke-width=".6"/><path d="M687 141.5l5-2.500 5 2.500v6l-5 2.500-5-2.500z" fill="#fff" stroke="#333" stroke-width=".8"/><path d="M687 141.5l5 2.500 5-2.500M692 144.0v6" fill="none" stroke="#333" stroke-width=".8"/><path d="M704.2 141.5l5-2.500 5 2.500v6l-5 2.500-5-2.500z" fill="#fff" stroke="#333" stroke-width=".8"/><path d="M704.2 141.5l5 2.500 5-2.500M709.2 144.0v6" fill="none" stroke="#333" stroke-width=".8"/><path d="M721.8 141.5l5-2.500 5 2.500v6l-5 2.500-5-2.500z" fill="#f0f040" stroke="#443" stroke-width=".8"/><path d="M721.8 141.5l5 2.500 5-2.500M726.8 144.0v6" fill="none" stroke="#443" stroke-width=".8"/><path d="M739.2 141.5l5-2.500 5 2.500v6l-5 2.500-5-2.500z" fill="#e8f090" stroke="#443" stroke-width=".8"/><path d="M739.2 141.5l5 2.500 5-2.500M744.2 144.0v6" fill="none" stroke="#443" stroke-width=".8"/><circle cx="756.5" cy="139.5" r=".6" fill="#223"/><circle cx="756.5" cy="141.9" r=".6" fill="#223"/><circle cx="756.5" cy="144.3" r=".6" fill="#223"/><circle cx="756.5" cy="146.7" r=".6" fill="#223"/><circle cx="756.5" cy="149.1" r=".6" fill="#223"/><circle cx="758.9" cy="139.5" r=".6" fill="#223"/><circle cx="758.9" cy="141.9" r=".6" fill="#223"/><circle cx="758.9" cy="144.3" r=".6" fill="#223"/><circle cx="758.9" cy="146.7" r=".6" fill="#223"/><circle cx="758.9" cy="149.1" r=".6" fill="#223"/><circle cx="761.3" cy="139.5" r=".6" fill="#223"/><circle cx="761.3" cy="141.9" r=".6" fill="#223"/><circle cx="761.3" cy="144.3" r=".6" fill="#223"/><circle cx="761.3" cy="146.7" r=".6" fill="#223"/><circle cx="761.3" cy="149.1" r=".6" fill="#223"/><circle cx="763.7" cy="139.5" r=".6" fill="#223"/><circle cx="763.7" cy="141.9" r=".6" fill="#223"/><circle cx="763.7" cy="144.3" r=".6" fill="#223"/><circle cx="763.7" cy="146.7" r=".6" fill="#223"/><circle cx="763.7" cy="149.1" r=".6" fill="#223"/><circle cx="766.1" cy="139.5" r=".6" fill="#223"/><circle cx="766.1" cy="141.9" r=".6" fill="#223"/><circle cx="766.1" cy="144.3" r=".6" fill="#223"/><circle cx="766.1" cy="146.7" r=".6" fill="#223"/><circle cx="766.1" cy="149.1" r=".6" fill="#223"/><path d="M773 139v11M784.500 139v11" stroke="#22a" stroke-width="1"/><path d="M774 144.500h10" stroke="#22a" stroke-width="1.500"/><path d="M776 142.500l-2 2 2 2M782 142.500l2 2-2 2" stroke="#22a" stroke-width="1" fill="none"/><path d="M790.500 139v5M801.500 139v5M791 141.500h10" stroke="#22a" stroke-width=".9"/><path d="M790 147h12M790 149.500h12" stroke="#889" stroke-width=".7" stroke-dasharray="1.500 1"/><rect x="808" y="140" width="10" height="7" fill="#189898" stroke="#145" stroke-width=".7"/><path d="M811 149h4M813 147v2" stroke="#145" stroke-width="1"/><path d="M815 142l4-3" stroke="#b84" stroke-width="1.200"/><path d="M826 150l4-5 5 3M830 145l1-6" fill="none" stroke="#222" stroke-width="1"/><path d="M831 139l3 2" stroke="#222" stroke-width=".8"/><path d="M845 141l7 7M852 141l-7 7" stroke="#c02020" stroke-width="1.100"/><circle cx="843" cy="148" r=".7" fill="#222"/><circle cx="853" cy="139.500" r=".7" fill="#222"/><circle cx="867" cy="141.500" r="2.500" fill="#e8e860" stroke="#886" stroke-width=".5"/><path d="M867 144v3l-3 3M867 147l3 3" stroke="#333" stroke-width=".8" fill="none"/><path d="M861 143c-1 2-1 4 1 5" stroke="#c02020" stroke-width=".8" fill="none"/><rect x="876.500" y="142.500" width="3" height="4" fill="none" stroke="#333" stroke-width=".8"/><rect x="886.500" y="142.500" width="3" height="4" fill="none" stroke="#333" stroke-width=".8"/><path d="M880 144.500h6" stroke="#c04040" stroke-width="1"/><path d="M895 146l5-2.500 5 2.500-5 2.500z" fill="#2a7ad8"/><path d="M895 143.500l5-2.500 5 2.500-5 2.500z" fill="#e8d040" stroke="#886" stroke-width=".4"/><path d="M894.500 140v4" stroke="#c02020" stroke-width=".8"/><path d="M912 145l7-4 4 3-7 4z" fill="#d8c850" stroke="#665" stroke-width=".5"/><path d="M912 147l4 3 7-4" fill="none" stroke="#2a7a9a" stroke-width="1.200"/><circle cx="931" cy="141.500" r="2.200" fill="#e8e860" stroke="#886" stroke-width=".5"/><circle cx="936" cy="143.500" r="2.200" fill="#e8e860" stroke="#886" stroke-width=".5"/><circle cx="933" cy="146.500" r="2.200" fill="#e8e860" stroke="#886" stroke-width=".5"/><path d="M933 149v2M936 146v3" stroke="#555" stroke-width=".8"/>
</svg>
<style>
#dlg{position:absolute;left:198px;top:136px;width:297px;height:325px;border-radius:4px 4px 2px 2px;background:linear-gradient(90deg,#ecebb4 0%,#e4e298 8%,#d6d25a 18%,#c8c224 28%,#c4bc1c 38%,#b4ac24 46%,#a8a02a 56%,#bcb428 60%,#a8a02a 64%,#98902a 80%,#a49c3c 92%,#b8b060 100%);border:1px solid #4a4a20;box-shadow:0 0 0 1px #2a2a2a,1px 2px 4px rgba(0,0,0,.6)}
#dlg .in{position:absolute;left:0;top:0;right:0;bottom:0;border:1px solid #f2f0b8;border-radius:3px 3px 1px 1px}
#dlg .cl{position:absolute;left:3px;top:14px;width:289px;height:306px;background:#fff;border:1px solid #6a6a30}
#dlg .t{font-size:8.1px;color:#333}
#dlg .cl .t{margin-top:1px}
#dlg .gbl{margin-top:.5px}
#dlg .btn{position:absolute;height:15px;border:1px solid #8e8f8f;border-radius:2px;background:linear-gradient(#f6f6f6 0%,#ececec 48%,#dedede 52%,#d2d2d2 100%);font-size:8.1px;color:#222;text-align:center;line-height:13.5px;white-space:nowrap}
#dlg .btn.dis{color:#9a9a9a;border-color:#c4c4c4;background:#f6f6f6}
#dlg .inp{position:absolute;height:14px;background:#fff;border-top:1px solid #555;border-left:1px solid #555;border-bottom:1px solid #e4e4e4;border-right:1px solid #e4e4e4;font-size:8.1px;color:#222;line-height:11px;padding-left:3px;white-space:nowrap}
#dlg .cmb:after{content:"";position:absolute;right:0;top:0;width:9px;height:11px;border-left:1px solid #bbb;border-bottom:1px solid #888;background:#f4f4f4}
#dlg .cmb:before{content:"";position:absolute;right:2px;top:4px;border:2.500px solid transparent;border-top:3px solid #222;z-index:2}
#dlg .gb{position:absolute;left:16px;width:262px;border:1px solid #d8d8d8;border-radius:2px}
#dlg .gbl{position:absolute;background:#fff;padding:0 2px;font-size:8.1px;color:#333;line-height:9px;white-space:nowrap}
</style>
<div id="dlg"><div class="in"></div><div class="a" style="right:0;top:14px;width:3px;height:306px;background:linear-gradient(#e6e2b0 0,#e6e2b0 25%,#c4bc60 26%,#c4bc60 82%,#deb27c 86%,#deb27c 100%)"></div>
<div class="t" style="left:3px;top:3px;font-size:8.300px;color:#5a5a4a">CAM_Property</div>
<div class="a" style="left:266px;top:-1px;width:27px;height:10px;border:1px solid #5a1a10;border-top:0;border-radius:0 0 3px 3px;background:linear-gradient(#e8a090 0%,#d4584a 45%,#c03020 50%,#c84030 100%)"></div>
<svg class="a" style="left:275px;top:0px" width="10" height="9" viewBox="0 0 10 9"><path d="M2.500 2l5 5M7.500 2l-5 5" stroke="#fff" stroke-width="1.500"/></svg>
<div class="cl">
<!-- coordinates inside .cl are page - (203,152) -->
<div class="t" style="left:9px;top:8px">Process information</div>
<div class="a" style="left:84px;top:6px;width:1px;height:13px;background:#555"></div>
<div class="t" style="left:87px;top:9px">Display attribute</div>
<div class="a" style="left:149px;top:7px;width:1px;height:12px;background:#777"></div>
<div class="t" style="left:154px;top:9px">Auxilary display</div>
<div class="a" style="left:212px;top:7px;width:1px;height:12px;background:#777"></div>
<div class="a" style="left:88px;top:19px;width:196px;height:1px;background:#bbb"></div>
<div class="a" style="left:283px;top:19px;width:1px;height:260px;background:#888"></div>
<div class="a" style="left:4px;top:278px;width:280px;height:1px;background:#888"></div>

<div class="t" style="left:12px;top:30px">Machining plan name</div>
<div class="inp cmb" style="left:100px;top:27px;width:69px">OLD</div>
<div class="btn" style="left:176px;top:27px;width:46px">Create...</div>
<div class="btn" style="left:229px;top:27px;width:46px">List...</div>

<div class="gb" style="left:12px;top:52px;height:33px"></div><div class="gbl" style="left:16px;top:48px">KATA</div>
<div class="t" style="left:18px;top:66px">Folder</div>
<div class="inp" style="left:100px;top:62px;width:69px;height:16px;border-right:0;border-bottom:0">3DPF_V11</div>
<div class="btn" style="left:176px;top:63px;width:69px">New / Refer...</div>

<div class="gb" style="left:12px;top:100px;height:53px"></div><div class="gbl" style="left:16px;top:96px">MachiningInf.File</div>
<div class="t" style="left:18px;top:113px">Folder</div>
<div class="inp" style="left:100px;top:109px;width:69px;height:16px;border-right:0;border-bottom:0">3DPF_DEMO</div>
<div class="btn" style="left:176px;top:109px;width:46px">Refer...</div>
<div class="t" style="left:18px;top:134px">Material name</div>
<div class="inp cmb" style="left:100px;top:131px;width:69px">AL</div>

<div class="t" style="left:15px;top:164px">Tool base position</div>
<div class="a" style="left:100px;top:165px;width:8px;height:8px;border:1px solid #8a8f98;border-radius:50%;background:#f4f4f4"></div>
<div class="t" style="left:110px;top:165px">Center</div>
<div class="a" style="left:164px;top:165px;width:8px;height:8px;border:1px solid #5a7a9a;border-radius:50%;background:radial-gradient(#1a3a5a 0,#2a5a7a 35%,#bfe0f0 40%,#eaf6fb 100%)"></div>
<div class="t" style="left:175px;top:165px">Top</div>
<div class="t" style="left:14px;top:185px">Model name</div>
<div class="inp cmb" style="left:100px;top:178px;width:69px">Auto</div>
<div class="btn dis" style="left:176px;top:178px;width:47px">Define...</div>
<div class="btn dis" style="left:229px;top:178px;width:46px">Display</div>
<div class="t" style="left:15px;top:206px">Thick</div>
<div class="inp" style="left:100px;top:202px;width:53px;border-right:0;border-bottom:0;text-align:right;padding-right:4px">0.0000</div>
<div class="t" style="left:14px;top:230px">NC coordinate system</div>
<div class="inp cmb" style="left:100px;top:226px;width:69px">-</div>
<div class="a" style="left:12px;top:247px;width:233px;height:1px;background:#999"></div>
<div class="a" style="left:13px;top:258px;width:8px;height:8px;border:1px solid #8a8f98;background:linear-gradient(135deg,#e0e0e0,#fff)"></div>
<div class="t" style="left:23px;top:259px">Do not show this dialog when choose CAM-OPEN next time</div>

<div class="btn" style="left:99px;top:285px;width:58px;border-color:#3c7fb1;background:linear-gradient(#eaf6fd 0%,#d9f0fc 48%,#bee6fd 52%,#a7d9f5 100%);box-shadow:inset 0 0 0 1px #48d8fb">OK</div>
<div class="btn" style="left:162px;top:285px;width:58px">Cancel</div>
<div class="btn" style="left:225px;top:285px;width:58px">Help</div>
</div>
</div>
<svg class="a" style="left:320px;top:445px" width="16" height="23" viewBox="0 0 16 23"><path d="M2 1v16.500l4-3.800l2.800 6.500l2.600-1.100l-2.800-6.300h5.400z" fill="#fff" stroke="#111" stroke-width="1"/></svg>
<style>
#bt{position:absolute;left:0;top:668px;width:1280px;height:52px;background:#fff}
#bt .t{font-size:8.3px;color:#555}
#bt .cb{position:absolute;background:#fff;border:1px solid #dcdcdc}
#bt .cb:after{content:"";position:absolute;right:3px;top:50%;margin-top:-1px;border:2px solid transparent;border-top:3px solid #444}
</style>
<div id="bt">
<div class="a" style="left:0;top:0;width:1280px;height:4px;background:#f2f2f2"></div>
<div class="a" style="left:3px;top:7px;width:1px;height:12px;border-left:1px dotted #999"></div>
<div class="cb" style="left:8px;top:5px;width:78px;height:13px"></div><div class="t" style="left:11px;top:7px;font-size:8.600px">Line</div>
<div class="a" style="left:87px;top:5px;width:37px;height:13px;background:#000"></div><div class="a" style="left:87px;top:10px;width:37px;height:2px;background:#30d838"></div>
<div class="t" style="left:138px;top:9px;letter-spacing:.3px">Color</div>
<div class="cb" style="left:171px;top:7px;width:50px;height:12px"></div><div class="a" style="left:174px;top:10px;width:35px;height:6px;background:#28d828;border:1px solid #3a8a3a"></div>
<div class="t" style="left:228px;top:9px;letter-spacing:.3px">Line type</div>
<div class="cb" style="left:268px;top:6px;width:49px;height:15px"></div><div class="a" style="left:271px;top:13px;width:35px;height:1px;background:#555"></div>
<div class="t" style="left:322px;top:9px;letter-spacing:.3px">Line width</div>
<div class="cb" style="left:366px;top:6px;width:49px;height:15px"></div><div class="a" style="left:369px;top:13px;width:36px;height:2px;background:#222"></div>
<div class="t" style="left:419px;top:9px;letter-spacing:.3px">Dropper</div><div class="t" style="left:454px;top:9px;letter-spacing:.3px">Reset</div>
<div class="a" style="left:516px;top:7px;width:1px;height:12px;border-left:1px dotted #999"></div>
<div class="a" style="left:520px;top:7px;width:16px;height:11px;background:#e4ecf8"></div>
<div class="t" style="left:521px;top:10px;font-size:6.500px;font-weight:bold;color:#1a2a6a">AUTO</div><div class="t" style="left:539px;top:10px;font-size:6.500px;font-weight:bold;color:#1a2a6a">FAST</div>
<svg class="a" style="left:725px;top:5px" width="140" height="16" viewBox="0 0 140 16" fill="none" stroke="#777" stroke-width=".9">
<path d="M2 11l9-6"/><circle cx="24" cy="8" r="3.500"/><path d="M37 11a4 4 0 0 1 8 0"/><path d="M54 6h7v6h-7zM54 6l2-2h7l-2 2M61 12l2-2v-6"/><path d="M71 4v9M82 4v9M71 6h11M71 11h11"/><path d="M88 12l3-7h9l-3 7z"/><rect x="105.500" y="3.500" width="10" height="10"/><path d="M106 12l3-4 2 2 2-3 2 5"/><rect x="122.500" y="3.500" width="10" height="10"/><path d="M123 4l9 9M132 4l-9 9"/></svg>
<div class="a" style="left:866px;top:7px;width:1px;height:12px;border-left:1px dotted #999"></div>
<div class="cb" style="left:871px;top:5px;width:42px;height:13px"></div><div class="t" style="left:874px;top:7px;font-size:7.500px;color:#333">3D</div>
<div class="t" style="left:916px;top:9px;color:#b8b8b8;letter-spacing:.3px">Input point</div>
<div class="a" style="left:960px;top:7px;width:34px;height:11px;background:#3a3a3a"></div><div class="t" style="left:975px;top:9px;font-size:7.500px;color:#777">0.000</div>
<div class="cb" style="left:997px;top:5px;width:44px;height:13px"></div><div class="t" style="left:1000px;top:7px;font-size:7.500px;color:#333">EL</div>
<div class="t" style="left:1066px;top:9px;color:#666">Eye point line &nbsp;:OFF</div>
<div class="a" style="left:516px;top:25px;width:766px;height:14px;background:#fff;border:1px solid #555"></div>
<div class="t" style="left:942px;top:43px;font-size:7.800px;color:#555">CAM_Open</div>
<div class="t" style="left:1112px;top:43px;font-size:7.500px;color:#555">X = -1378.560, Y = 1051.751, Z = &nbsp;382.874</div>
</div>
<div class="a" style="left:559.5px;top:673px;width:162px;height:37px;background:#858585"></div>
<svg class="a" style="left:556px;top:668px" width="172" height="46" viewBox="0 0 172 46"><text x="9.5" y="33.5" font-family="'Liberation Sans',sans-serif" font-weight="bold" font-size="34" fill="#fff" stroke="#000" stroke-width="3.6" stroke-linejoin="round" paint-order="stroke" textLength="151" lengthAdjust="spacingAndGlyphs">CAM open</text></svg>
<svg class="a" style="left:1000px;top:660px" width="280" height="60" viewBox="1000 660 280 60">
<defs><linearGradient id="cg" x1="0" y1="0" x2="1" y2="1"><stop offset="0" stop-color="#c80c0c"/><stop offset=".45" stop-color="#f01414"/><stop offset="1" stop-color="#a00a0a"/></linearGradient><linearGradient id="cg2" x1="0" y1="0" x2="1" y2="0"><stop offset="0" stop-color="#3a3a3a"/><stop offset="1" stop-color="#0c0c0c"/></linearGradient></defs>
<path d="M1029.600 668.750L1050.400 680V705L1029.600 716.700L1008.300 705.400L1008.750 680.400Z" fill="#fff" stroke="#fff" stroke-width="2" stroke-linejoin="round"/>
<path d="M1029.600 668.750L1050.400 680V705L1029.600 716.700L1008.300 705.400L1008.750 680.400Z" fill="#080808"/>
<path d="M1008.750 680.400L1029.600 668.750V677.900L1008.750 687.900Z" fill="url(#cg2)"/>
<path d="M1008.750 687.900L1029.600 677.900V692.500L1017.900 698.750L1019.600 702.100L1031.250 696.250L1041.700 700L1024.200 710.800L1008.300 705.400Z" fill="url(#cg)"/>
<text x="1062.500" y="703.800" font-family="'Liberation Serif',serif" font-weight="bold" font-size="35" fill="#0a0a0a" stroke="#fff" stroke-width="1.600" stroke-linejoin="round" paint-order="stroke" textLength="183.500" lengthAdjust="spacingAndGlyphs">CADmeister</text>
<path d="M1186.400 678l3.400 1.900v4l-3.400 1.900l-3.400-1.900v-4z" fill="#c81414" stroke="#fff" stroke-width="1" paint-order="stroke"/>
<path d="M1186.400 678l3.400 1.900l-3.400 1.900l-3.400-1.900z" fill="#2a0a0a"/>
<text x="1246" y="685.500" font-family="'Liberation Sans',sans-serif" font-size="7" fill="#111">®</text>
</svg>
</body></html>
